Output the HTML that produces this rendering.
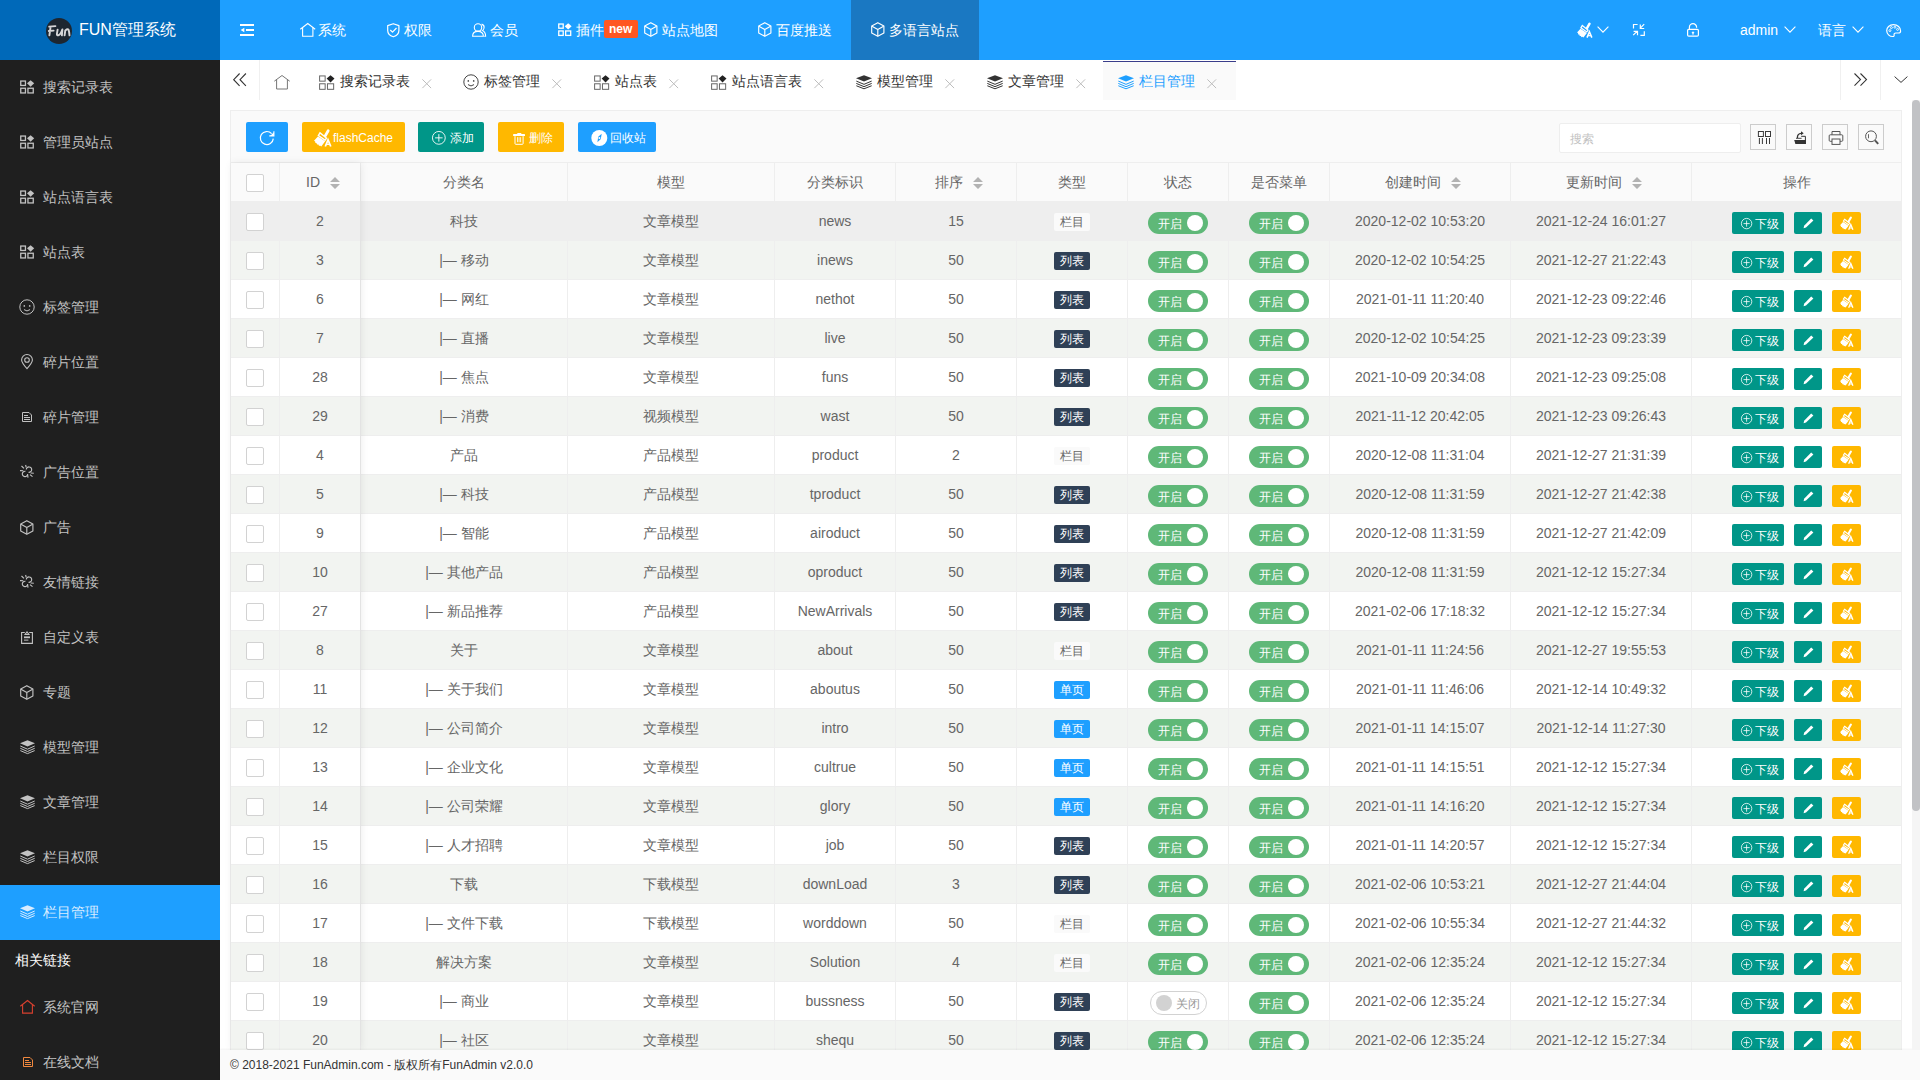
<!DOCTYPE html><html><head><meta charset="utf-8"><title>FunAdmin</title><style>
*{box-sizing:border-box;margin:0;padding:0}
html,body{width:1920px;height:1080px;overflow:hidden;background:#fff}
body{position:relative;font-family:"Liberation Sans",sans-serif;font-size:14px;color:#666}
.a{position:absolute}
.ic{position:absolute;display:block;overflow:visible}
.t{position:absolute;white-space:nowrap;line-height:1}
.sb{color:#c2c2c2;font-size:14px}
.hd{color:#fff;font-size:14px}
.c{position:absolute;text-align:center;line-height:1;white-space:nowrap}
.btn{position:absolute;border-radius:2px}
.sw{position:absolute;width:60px;height:22px;border-radius:20px;background:#5fb878}
.sw .k{position:absolute;left:39px;top:3px;width:16px;height:16px;border-radius:50%;background:#fff}
.sw .l{position:absolute;left:9.5px;top:5.6px;font-size:12px;color:#fff;line-height:1}
.tag{position:absolute;width:36px;height:18px;border-radius:2px;font-size:12px;line-height:18px;text-align:center}
.cb{position:absolute;width:18px;height:18px;border:1px solid #d2d2d2;background:#fff;border-radius:2px}
</style></head><body>
<div class="a" style="left:0;top:60px;width:220px;height:1020px;background:#1f1f1f"></div>
<div class="a" style="left:0;top:0;width:220px;height:60px;background:#0069b9"></div>
<div class="a" style="left:46px;top:18px;width:26px;height:26px;border-radius:50%;background:#1d2630"></div>
<svg class="ic" style="left:40px;top:12px" width="40" height="38" viewBox="0 0 40 38"><g fill="none" stroke="#d6d6d8" stroke-width="1.9" stroke-linecap="round" stroke-linejoin="round"><path d="M9.2 14.6 L15.4 14.1 M10.6 14.6 L9.4 23.4 M8.8 19 L13.6 18.6"/><path d="M17.6 17.6 L16.9 21.8 Q16.7 23.4 18.4 23.2 Q20.6 22.8 22.4 17.4 L21.9 23.3"/><path d="M24.6 23.4 L25.3 18.4 Q27.6 16.6 28.6 17.8 Q29.2 19.4 29.5 23.4"/></g></svg>
<div class="t" style="left:79px;top:22px;font-size:16px;color:#fff">FUN管理系统</div>
<svg class="ic" style="left:20px;top:80px" width="17" height="17" viewBox="0 0 17 17"><g fill="none" stroke="#c2c2c2" stroke-width="1.3"><rect x="0.75" y="1.05" width="4.70" height="4.40"/><rect x="0.75" y="8.25" width="4.70" height="4.70"/><rect x="7.95" y="8.25" width="5.30" height="4.70"/></g><path d="M10.60 0.20 L14.20 3.30 L10.60 6.80 L7.00 3.30Z" fill="#c2c2c2"/></svg>
<div class="t sb" style="left:43px;top:80px;color:#c2c2c2">搜索记录表</div>
<svg class="ic" style="left:20px;top:135px" width="17" height="17" viewBox="0 0 17 17"><g fill="none" stroke="#c2c2c2" stroke-width="1.3"><rect x="0.75" y="1.05" width="4.70" height="4.40"/><rect x="0.75" y="8.25" width="4.70" height="4.70"/><rect x="7.95" y="8.25" width="5.30" height="4.70"/></g><path d="M10.60 0.20 L14.20 3.30 L10.60 6.80 L7.00 3.30Z" fill="#c2c2c2"/></svg>
<div class="t sb" style="left:43px;top:135px;color:#c2c2c2">管理员站点</div>
<svg class="ic" style="left:20px;top:190px" width="17" height="17" viewBox="0 0 17 17"><g fill="none" stroke="#c2c2c2" stroke-width="1.3"><rect x="0.75" y="1.05" width="4.70" height="4.40"/><rect x="0.75" y="8.25" width="4.70" height="4.70"/><rect x="7.95" y="8.25" width="5.30" height="4.70"/></g><path d="M10.60 0.20 L14.20 3.30 L10.60 6.80 L7.00 3.30Z" fill="#c2c2c2"/></svg>
<div class="t sb" style="left:43px;top:190px;color:#c2c2c2">站点语言表</div>
<svg class="ic" style="left:20px;top:245px" width="17" height="17" viewBox="0 0 17 17"><g fill="none" stroke="#c2c2c2" stroke-width="1.3"><rect x="0.75" y="1.05" width="4.70" height="4.40"/><rect x="0.75" y="8.25" width="4.70" height="4.70"/><rect x="7.95" y="8.25" width="5.30" height="4.70"/></g><path d="M10.60 0.20 L14.20 3.30 L10.60 6.80 L7.00 3.30Z" fill="#c2c2c2"/></svg>
<div class="t sb" style="left:43px;top:245px;color:#c2c2c2">站点表</div>
<svg class="ic" style="left:19.2px;top:298.7px" width="16" height="16" viewBox="0 0 16 16"><g fill="none" stroke="#c2c2c2" stroke-width="1.0"><circle cx="8" cy="8" r="7.2"/><path d="M5.0 10.6 Q8 13.3 11.0 10.6"/></g><ellipse cx="5.3" cy="6.9" rx="0.8" ry="0.95" fill="#c2c2c2"/><ellipse cx="10.7" cy="6.9" rx="0.8" ry="0.95" fill="#c2c2c2"/></svg>
<div class="t sb" style="left:43px;top:300px;color:#c2c2c2">标签管理</div>
<svg class="ic" style="left:21px;top:354px" width="12" height="16" viewBox="0 0 12 16"><g fill="none" stroke="#c2c2c2" stroke-width="1.1"><path d="M6 14.6 C2.5 10.6 0.6 8.2 0.6 5.9 A5.4 5.4 0 0 1 11.4 5.9 C11.4 8.2 9.5 10.6 6 14.6Z"/><circle cx="6" cy="6" r="2.3"/></g></svg>
<div class="t sb" style="left:43px;top:355px;color:#c2c2c2">碎片位置</div>
<svg class="ic" style="left:22px;top:412px" width="11" height="11" viewBox="0 0 11 11"><g fill="none" stroke="#c2c2c2" stroke-width="1"><path d="M0.5 0.5 H7 L9.5 3 V9.5 H0.5Z"/><path d="M2 3.5 H6 M2 5.5 H8 M2 7.5 H8"/></g></svg>
<div class="t sb" style="left:43px;top:410px;color:#c2c2c2">碎片管理</div>
<svg class="ic" style="left:17px;top:462px" width="20" height="20" viewBox="0 0 20 20"><g fill="none" stroke="#c2c2c2" stroke-width="1.15" stroke-linecap="butt"><path d="M9.3 7.6 A2.7 2.7 0 1 1 11.5 10.3"/><path d="M10.7 12 A2.7 2.7 0 1 1 8.5 9.3"/><path d="M4.5 4 L7 6.3 M8.6 3 L9.2 5.4 M3 8.6 L6.3 8.8 M13.7 11 L16.8 11.2 M13 12.6 L15.5 14.6 M10.6 12.8 L11 15.6"/></g></svg>
<div class="t sb" style="left:43px;top:465px;color:#c2c2c2">广告位置</div>
<svg class="ic" style="left:20px;top:519.5px" width="14" height="15" viewBox="0 0 14 15"><g fill="none" stroke="#c2c2c2" stroke-width="1.15" stroke-linejoin="round"><path d="M6.8 0.7 L12.9 4.1 V10.9 L6.8 14.3 L0.7 10.9 V4.1Z"/><path d="M1 4.3 L6.8 7.6 L12.6 4.3 M6.8 7.6 V14"/></g></svg>
<div class="t sb" style="left:43px;top:520px;color:#c2c2c2">广告</div>
<svg class="ic" style="left:17px;top:572px" width="20" height="20" viewBox="0 0 20 20"><g fill="none" stroke="#c2c2c2" stroke-width="1.15" stroke-linecap="butt"><path d="M9.3 7.6 A2.7 2.7 0 1 1 11.5 10.3"/><path d="M10.7 12 A2.7 2.7 0 1 1 8.5 9.3"/><path d="M4.5 4 L7 6.3 M8.6 3 L9.2 5.4 M3 8.6 L6.3 8.8 M13.7 11 L16.8 11.2 M13 12.6 L15.5 14.6 M10.6 12.8 L11 15.6"/></g></svg>
<div class="t sb" style="left:43px;top:575px;color:#c2c2c2">友情链接</div>
<svg class="ic" style="left:21px;top:630.5px" width="12" height="13" viewBox="0 0 12 13"><g fill="none" stroke="#c2c2c2" stroke-width="1.1"><path d="M3.8 1.5 H0.6 V12.4 H11.4 V1.5 H8.2"/><path d="M4 3.5 L6 0.8 L8 3.5Z"/></g><rect x="3" y="5.4" width="6" height="1.8" fill="#c2c2c2"/><rect x="3" y="8.6" width="4.4" height="1" fill="#c2c2c2"/></svg>
<div class="t sb" style="left:43px;top:630px;color:#c2c2c2">自定义表</div>
<svg class="ic" style="left:20px;top:684.5px" width="14" height="15" viewBox="0 0 14 15"><g fill="none" stroke="#c2c2c2" stroke-width="1.15" stroke-linejoin="round"><path d="M6.8 0.7 L12.9 4.1 V10.9 L6.8 14.3 L0.7 10.9 V4.1Z"/><path d="M1 4.3 L6.8 7.6 L12.6 4.3 M6.8 7.6 V14"/></g></svg>
<div class="t sb" style="left:43px;top:685px;color:#c2c2c2">专题</div>
<svg class="ic" style="left:19.6px;top:740px" width="16" height="15" viewBox="0 0 16 15"><path d="M7.50 0.20 L15.00 3.30 L7.50 6.40 L0.00 3.30Z" fill="#c2c2c2"/><g fill="none" stroke="#c2c2c2" stroke-width="1.0"><path d="M0.30 6.00 L7.50 9.20 L14.70 6.00"/><path d="M0.30 8.30 L7.50 11.50 L14.70 8.30"/><path d="M0.30 10.60 L7.50 13.60 L14.70 10.60"/></g></svg>
<div class="t sb" style="left:43px;top:740px;color:#c2c2c2">模型管理</div>
<svg class="ic" style="left:19.6px;top:795px" width="16" height="15" viewBox="0 0 16 15"><path d="M7.50 0.20 L15.00 3.30 L7.50 6.40 L0.00 3.30Z" fill="#c2c2c2"/><g fill="none" stroke="#c2c2c2" stroke-width="1.0"><path d="M0.30 6.00 L7.50 9.20 L14.70 6.00"/><path d="M0.30 8.30 L7.50 11.50 L14.70 8.30"/><path d="M0.30 10.60 L7.50 13.60 L14.70 10.60"/></g></svg>
<div class="t sb" style="left:43px;top:795px;color:#c2c2c2">文章管理</div>
<svg class="ic" style="left:19.6px;top:850px" width="16" height="15" viewBox="0 0 16 15"><path d="M7.50 0.20 L15.00 3.30 L7.50 6.40 L0.00 3.30Z" fill="#c2c2c2"/><g fill="none" stroke="#c2c2c2" stroke-width="1.0"><path d="M0.30 6.00 L7.50 9.20 L14.70 6.00"/><path d="M0.30 8.30 L7.50 11.50 L14.70 8.30"/><path d="M0.30 10.60 L7.50 13.60 L14.70 10.60"/></g></svg>
<div class="t sb" style="left:43px;top:850px;color:#c2c2c2">栏目权限</div>
<div class="a" style="left:0;top:885px;width:220px;height:55px;background:#1e9fff"></div>
<svg class="ic" style="left:19.6px;top:905px" width="16" height="15" viewBox="0 0 16 15"><path d="M7.50 0.20 L15.00 3.30 L7.50 6.40 L0.00 3.30Z" fill="#d9ecff"/><g fill="none" stroke="#d9ecff" stroke-width="1.0"><path d="M0.30 6.00 L7.50 9.20 L14.70 6.00"/><path d="M0.30 8.30 L7.50 11.50 L14.70 8.30"/><path d="M0.30 10.60 L7.50 13.60 L14.70 10.60"/></g></svg>
<div class="t sb" style="left:43px;top:905px;color:#d9ecff">栏目管理</div>
<div class="t" style="left:15px;top:953px;font-size:14px;color:#fff">相关链接</div>
<svg class="ic" style="left:20px;top:999.6px" width="15" height="13.6" viewBox="0 0 15 13.6"><g fill="none" stroke="#d8402f" stroke-width="1.1"><path d="M0.3 6.2 L7.50 0.5 L14.70 6.2"/><path d="M2.6 4.5 V13.10 H12.40 V4.5"/></g></svg>
<div class="t sb" style="left:43px;top:1000px">系统官网</div>
<svg class="ic" style="left:22.5px;top:1057px" width="10" height="11" viewBox="0 0 10 11"><g fill="none" stroke="#f0883e" stroke-width="1"><path d="M0.5 0.5 H7 L9.5 3 V9.5 H0.5Z"/><path d="M2 3.5 H6 M2 5.5 H8 M2 7.5 H8"/></g></svg>
<div class="t sb" style="left:43px;top:1055px">在线文档</div>
<div class="a" style="left:220px;top:0;width:1700px;height:60px;background:#1e9fff"></div>
<svg class="ic" style="left:240px;top:24px" width="14" height="12" viewBox="0 0 14 12"><g fill="#fff"><rect x="0" y="0" width="14" height="2"/><rect x="6" y="5" width="8" height="2"/><rect x="0" y="10" width="14" height="2"/><path d="M0.6 6 L4.3 3.8 V8.2Z"/></g></svg>
<div class="a" style="left:851px;top:0;width:128px;height:60px;background:#1a78c2"></div>
<svg class="ic" style="left:299.5px;top:22.5px" width="15.5" height="13.8" viewBox="0 0 15.5 13.8"><g fill="none" stroke="#fff" stroke-width="1.1"><path d="M0.3 6.2 L7.75 0.5 L15.20 6.2"/><path d="M2.6 4.5 V13.30 H12.90 V4.5"/></g></svg>
<div class="t hd" style="left:318px;top:23px">系统</div>
<svg class="ic" style="left:386.5px;top:22.5px" width="13" height="15" viewBox="0 0 13 15"><g fill="none" stroke="#fff" stroke-width="1.2" stroke-linejoin="round"><path d="M6.3 0.7 L11.9 2.6 V7.6 C11.9 10.6 9.6 12.8 6.3 13.8 C3 12.8 0.7 10.6 0.7 7.6 V2.6Z"/><path d="M3.3 7 L5.5 9.2 L9.5 5"/></g></svg>
<div class="t hd" style="left:404px;top:23px">权限</div>
<svg class="ic" style="left:471.5px;top:23px" width="15" height="14" viewBox="0 0 15 14"><g fill="none" stroke="#fff" stroke-width="1.1"><circle cx="6" cy="4.4" r="3.7"/><path d="M0.6 13.3 C0.6 10.3 2.6 8.4 6 8.4 C9.4 8.4 11.4 10.3 11.4 13.3Z"/><path d="M9.6 1.1 C11.6 1.7 12.3 3.3 12.1 4.8 C11.9 6.3 11 7.2 10.4 7.6 C12.6 8.6 13.7 10.6 13.6 13.3 H12.2"/></g></svg>
<div class="t hd" style="left:490px;top:23px">会员</div>
<svg class="ic" style="left:558px;top:23px" width="16" height="16" viewBox="0 0 16 16"><g fill="none" stroke="#fff" stroke-width="1.3"><rect x="0.75" y="1.03" width="4.46" height="4.17"/><rect x="0.75" y="7.95" width="4.46" height="4.46"/><rect x="7.66" y="7.95" width="5.04" height="4.46"/></g><path d="M10.18 0.20 L13.63 3.17 L10.18 6.53 L6.72 3.17Z" fill="#fff"/></svg>
<div class="t hd" style="left:576px;top:23px">插件</div>
<div class="a" style="left:604px;top:20px;width:34px;height:18px;background:#ff5722;border-radius:2px"></div>
<div class="t" style="left:609px;top:23px;font-size:12px;color:#fff;font-weight:bold">new</div>
<svg class="ic" style="left:643.5px;top:22.3px" width="14" height="15" viewBox="0 0 14 15"><g fill="none" stroke="#fff" stroke-width="1.15" stroke-linejoin="round"><path d="M6.8 0.7 L12.9 4.1 V10.9 L6.8 14.3 L0.7 10.9 V4.1Z"/><path d="M1 4.3 L6.8 7.6 L12.6 4.3 M6.8 7.6 V14"/></g></svg>
<div class="t hd" style="left:662px;top:23px">站点地图</div>
<svg class="ic" style="left:757.5px;top:22.3px" width="14" height="15" viewBox="0 0 14 15"><g fill="none" stroke="#fff" stroke-width="1.15" stroke-linejoin="round"><path d="M6.8 0.7 L12.9 4.1 V10.9 L6.8 14.3 L0.7 10.9 V4.1Z"/><path d="M1 4.3 L6.8 7.6 L12.6 4.3 M6.8 7.6 V14"/></g></svg>
<div class="t hd" style="left:776px;top:23px">百度推送</div>
<svg class="ic" style="left:871px;top:22.3px" width="14" height="15" viewBox="0 0 14 15"><g fill="none" stroke="#fff" stroke-width="1.15" stroke-linejoin="round"><path d="M6.8 0.7 L12.9 4.1 V10.9 L6.8 14.3 L0.7 10.9 V4.1Z"/><path d="M1 4.3 L6.8 7.6 L12.6 4.3 M6.8 7.6 V14"/></g></svg>
<div class="t hd" style="left:889px;top:23px">多语言站点</div>
<svg class="ic" style="left:1577px;top:22.6px" width="18" height="18" viewBox="0 0 18 18"><path d="M12.54 0.69 L9.89 5.29" stroke="#fff" stroke-width="2.42" stroke-linecap="round"/><path d="M5.29 2.53 L11.04 7.13 L9.77 8.97 L3.91 4.83Z" fill="none" stroke="#fff" stroke-width="1.26"/><path d="M3.45 5.75 L9.89 10.00 L6.44 14.49 L5.29 13.68 L4.48 14.14 L3.91 12.88 L2.76 12.88 L2.30 11.61 L1.15 11.38 L1.03 10.12 L0.00 9.54Z" fill="#fff"/><path d="M10.00 14.60 L12.42 8.74 L14.83 14.60" fill="none" stroke="#fff" stroke-width="1.55"/><path d="M11.04 12.65 L13.80 12.65" stroke="#fff" stroke-width="1.15"/></svg>
<svg class="ic" style="left:1597px;top:26px" width="12" height="7" viewBox="0 0 12 7"><path d="M0.6 0.6 L6.00 6.10 L11.40 0.6" fill="none" stroke="#fff" stroke-width="1.1"/></svg>
<svg class="ic" style="left:1632px;top:23px" width="14" height="14" viewBox="0 0 14 14"><g fill="none" stroke="#fff" stroke-width="1.2"><path d="M1.5 5.6 V1.5 H5.6"/><path d="M12.2 1.2 L8.3 5.1 M8.3 1.6 V5.5 H12.2"/><path d="M1.2 12.2 L5.1 8.3 M1.6 8.3 H5.5 V12.2"/><path d="M8.4 12.3 H12.3 V8.2"/></g></svg>
<svg class="ic" style="left:1687px;top:23px" width="12" height="14" viewBox="0 0 12 14"><g fill="none" stroke="#fff" stroke-width="1.2"><rect x="0.6" y="6.3" width="10.8" height="6.8" rx="1.2"/><path d="M2.4 6.3 V4.3 A3.6 3.6 0 0 1 9.6 4.3 V4.8"/></g><path d="M6 8.3 L7.6 10 H6.7 V11.6 H5.3 V10 H4.4Z" fill="#fff"/></svg>
<div class="t hd" style="left:1740px;top:23px">admin</div>
<svg class="ic" style="left:1783.5px;top:26px" width="12" height="7" viewBox="0 0 12 7"><path d="M0.6 0.6 L6.00 6.10 L11.40 0.6" fill="none" stroke="#fff" stroke-width="1.1"/></svg>
<div class="t hd" style="left:1818px;top:23px">语言</div>
<svg class="ic" style="left:1851.5px;top:26px" width="12" height="7" viewBox="0 0 12 7"><path d="M0.6 0.6 L6.00 6.10 L11.40 0.6" fill="none" stroke="#fff" stroke-width="1.1"/></svg>
<svg class="ic" style="left:1885.5px;top:23.5px" width="16" height="13" viewBox="0 0 16 13"><path d="M7.5 0.7 C3.4 0.7 0.7 3.4 0.7 6.6 C0.7 10 3.6 12.5 6.7 12.5 C7.9 12.5 8.3 11.9 8.1 11.1 C7.8 10 8.5 9 9.8 9 H12.3 C13.9 9 14.6 8.1 14.6 6.9 C14.6 3.4 11.5 0.7 7.5 0.7Z" fill="none" stroke="#fff" stroke-width="1.2"/><g fill="none" stroke="#fff" stroke-width="0.9"><circle cx="3.9" cy="6.6" r="1"/><circle cx="5.4" cy="3.6" r="1"/><circle cx="8.9" cy="3.2" r="1"/><circle cx="11.6" cy="5.4" r="1"/></g></svg>
<div class="a" style="left:259px;top:60px;width:1px;height:40px;background:#f0f0f0"></div>
<svg class="ic" style="left:233px;top:73px" width="14" height="14" viewBox="0 0 14 14"><path d="M6.6 0.5 L0.7 6.7 L6.6 12.9 M12.9 0.5 L7 6.7 L12.9 12.9" fill="none" stroke="#333" stroke-width="1.1"/></svg>
<svg class="ic" style="left:274px;top:74.5px" width="16" height="14.5" viewBox="0 0 16 14.5"><g fill="none" stroke="#777" stroke-width="1.0"><path d="M0.3 6.2 L8.00 0.5 L15.70 6.2"/><path d="M2.6 4.5 V14.00 H13.40 V4.5"/></g></svg>
<svg class="ic" style="left:318.5px;top:74.5px" width="18" height="18" viewBox="0 0 18 18"><g fill="none" stroke="#666" stroke-width="1.0"><rect x="0.61" y="0.94" width="5.54" height="5.21"/><rect x="0.61" y="8.78" width="5.54" height="5.54"/><rect x="8.46" y="8.78" width="6.19" height="5.54"/></g><path d="M11.55 0.19 L15.48 3.60 L11.55 7.41 L7.63 3.60Z" fill="#222"/></svg>
<div class="t" style="left:340px;top:74px;color:#333;font-size:14px">搜索记录表</div>
<svg class="ic" style="left:422px;top:79px" width="10" height="10" viewBox="0 0 10 10"><path d="M0.4 0.4 L9.10 9.10 M9.10 0.4 L0.4 9.10" fill="none" stroke="#bdbdbd" stroke-width="1.0"/></svg>
<svg class="ic" style="left:462.9px;top:73.9px" width="16" height="16" viewBox="0 0 16 16"><g fill="none" stroke="#444" stroke-width="1.0"><circle cx="8" cy="8" r="7.2"/><path d="M5.0 10.6 Q8 13.3 11.0 10.6"/></g><ellipse cx="5.3" cy="6.9" rx="0.8" ry="0.95" fill="#444"/><ellipse cx="10.7" cy="6.9" rx="0.8" ry="0.95" fill="#444"/></svg>
<div class="t" style="left:484px;top:74px;color:#333;font-size:14px">标签管理</div>
<svg class="ic" style="left:552px;top:79px" width="10" height="10" viewBox="0 0 10 10"><path d="M0.4 0.4 L9.10 9.10 M9.10 0.4 L0.4 9.10" fill="none" stroke="#bdbdbd" stroke-width="1.0"/></svg>
<svg class="ic" style="left:593.5px;top:74.5px" width="18" height="18" viewBox="0 0 18 18"><g fill="none" stroke="#666" stroke-width="1.0"><rect x="0.61" y="0.94" width="5.54" height="5.21"/><rect x="0.61" y="8.78" width="5.54" height="5.54"/><rect x="8.46" y="8.78" width="6.19" height="5.54"/></g><path d="M11.55 0.19 L15.48 3.60 L11.55 7.41 L7.63 3.60Z" fill="#222"/></svg>
<div class="t" style="left:615px;top:74px;color:#333;font-size:14px">站点表</div>
<svg class="ic" style="left:669px;top:79px" width="10" height="10" viewBox="0 0 10 10"><path d="M0.4 0.4 L9.10 9.10 M9.10 0.4 L0.4 9.10" fill="none" stroke="#bdbdbd" stroke-width="1.0"/></svg>
<svg class="ic" style="left:710.5px;top:74.5px" width="18" height="18" viewBox="0 0 18 18"><g fill="none" stroke="#666" stroke-width="1.0"><rect x="0.61" y="0.94" width="5.54" height="5.21"/><rect x="0.61" y="8.78" width="5.54" height="5.54"/><rect x="8.46" y="8.78" width="6.19" height="5.54"/></g><path d="M11.55 0.19 L15.48 3.60 L11.55 7.41 L7.63 3.60Z" fill="#222"/></svg>
<div class="t" style="left:732px;top:74px;color:#333;font-size:14px">站点语言表</div>
<svg class="ic" style="left:814px;top:79px" width="10" height="10" viewBox="0 0 10 10"><path d="M0.4 0.4 L9.10 9.10 M9.10 0.4 L0.4 9.10" fill="none" stroke="#bdbdbd" stroke-width="1.0"/></svg>
<svg class="ic" style="left:856px;top:75px" width="17" height="15" viewBox="0 0 17 15"><path d="M8.00 0.20 L16.00 3.35 L8.00 6.49 L0.00 3.35Z" fill="#333"/><g fill="none" stroke="#333" stroke-width="1.0"><path d="M0.32 6.09 L8.00 9.33 L15.68 6.09"/><path d="M0.32 8.42 L8.00 11.66 L15.68 8.42"/><path d="M0.32 10.75 L8.00 13.79 L15.68 10.75"/></g></svg>
<div class="t" style="left:877px;top:74px;color:#333;font-size:14px">模型管理</div>
<svg class="ic" style="left:945px;top:79px" width="10" height="10" viewBox="0 0 10 10"><path d="M0.4 0.4 L9.10 9.10 M9.10 0.4 L0.4 9.10" fill="none" stroke="#bdbdbd" stroke-width="1.0"/></svg>
<svg class="ic" style="left:987px;top:75px" width="17" height="15" viewBox="0 0 17 15"><path d="M8.00 0.20 L16.00 3.35 L8.00 6.49 L0.00 3.35Z" fill="#333"/><g fill="none" stroke="#333" stroke-width="1.0"><path d="M0.32 6.09 L8.00 9.33 L15.68 6.09"/><path d="M0.32 8.42 L8.00 11.66 L15.68 8.42"/><path d="M0.32 10.75 L8.00 13.79 L15.68 10.75"/></g></svg>
<div class="t" style="left:1008px;top:74px;color:#333;font-size:14px">文章管理</div>
<svg class="ic" style="left:1076px;top:79px" width="10" height="10" viewBox="0 0 10 10"><path d="M0.4 0.4 L9.10 9.10 M9.10 0.4 L0.4 9.10" fill="none" stroke="#bdbdbd" stroke-width="1.0"/></svg>
<div class="a" style="left:1103px;top:61px;width:133px;height:1px;background:#393d8a"></div>
<div class="a" style="left:1103px;top:62px;width:133px;height:38px;background:#fafafa"></div>
<svg class="ic" style="left:1118px;top:75px" width="17" height="15" viewBox="0 0 17 15"><path d="M8.00 0.20 L16.00 3.35 L8.00 6.49 L0.00 3.35Z" fill="#1e9fff"/><g fill="none" stroke="#1e9fff" stroke-width="1.0"><path d="M0.32 6.09 L8.00 9.33 L15.68 6.09"/><path d="M0.32 8.42 L8.00 11.66 L15.68 8.42"/><path d="M0.32 10.75 L8.00 13.79 L15.68 10.75"/></g></svg>
<div class="t" style="left:1139px;top:74px;color:#1e9fff;font-size:14px">栏目管理</div>
<svg class="ic" style="left:1207px;top:79px" width="10" height="10" viewBox="0 0 10 10"><path d="M0.4 0.4 L9.10 9.10 M9.10 0.4 L0.4 9.10" fill="none" stroke="#bdbdbd" stroke-width="1.0"/></svg>
<div class="a" style="left:1840px;top:60px;width:1px;height:40px;background:#f0f0f0"></div>
<div class="a" style="left:1880px;top:60px;width:1px;height:40px;background:#f0f0f0"></div>
<svg class="ic" style="left:1854px;top:73.3px" width="14" height="14" viewBox="0 0 14 14"><path d="M0.5 0.5 L6.5 6.6 L0.5 12.7 M6.5 0.5 L12.5 6.6 L6.5 12.7" fill="none" stroke="#333" stroke-width="1.1"/></svg>
<svg class="ic" style="left:1893.5px;top:76px" width="14" height="7.3" viewBox="0 0 14 7.3"><path d="M0.6 0.6 L7.00 6.40 L13.40 0.6" fill="none" stroke="#333" stroke-width="1.0"/></svg>
<div class="a" style="left:230px;top:110px;width:1672px;height:950px;border:1px solid #eee;background:#fafafa"></div>
<div class="a" style="left:231px;top:162px;width:1670px;height:1px;background:#eee"></div>
<div class="btn" style="left:246px;top:122px;width:42px;height:30px;background:#1e9fff"></div>
<svg class="ic" style="left:259px;top:130px" width="17" height="17" viewBox="0 0 17 17"><path d="M14.3 8.6 A6.5 6.5 0 1 1 12.6 3.6" fill="none" stroke="#fff" stroke-width="1.2"/><path d="M10.3 5.9 H14.9 V1.2" fill="none" stroke="#fff" stroke-width="1.1"/><path d="M11 5.9 L14.9 5.9 L14.9 2.2Z" fill="#fff"/></svg>
<div class="btn" style="left:302px;top:122px;width:103px;height:30px;background:#ffb800"></div>
<svg class="ic" style="left:314.3px;top:129.6px" width="20" height="20" viewBox="0 0 20 20"><path d="M14.17 0.78 L11.18 5.98" stroke="#fff" stroke-width="2.73" stroke-linecap="round"/><path d="M5.98 2.86 L12.48 8.06 L11.05 10.14 L4.42 5.46Z" fill="none" stroke="#fff" stroke-width="1.43"/><path d="M3.90 6.50 L11.18 11.31 L7.28 16.38 L5.98 15.47 L5.07 15.99 L4.42 14.56 L3.12 14.56 L2.60 13.13 L1.30 12.87 L1.17 11.44 L0.00 10.79Z" fill="#fff"/><path d="M11.31 16.51 L14.04 9.88 L16.77 16.51" fill="none" stroke="#fff" stroke-width="1.76"/><path d="M12.48 14.30 L15.60 14.30" stroke="#fff" stroke-width="1.30"/></svg>
<div class="t" style="left:333px;top:132px;font-size:12px;color:#fff">flashCache</div>
<div class="btn" style="left:418px;top:122px;width:66px;height:30px;background:#009688"></div>
<svg class="ic" style="left:432.2px;top:131px" width="14" height="14" viewBox="0 0 14 14"><g fill="none" stroke="#fff" stroke-width="0.9"><circle cx="6.85" cy="6.85" r="6.40"/><path d="M6.85 3.08 V10.62 M3.08 6.85 H10.62"/></g></svg>
<div class="t" style="left:449.5px;top:132px;font-size:12px;color:#fff">添加</div>
<div class="btn" style="left:498px;top:122px;width:66px;height:30px;background:#ffb800"></div>
<svg class="ic" style="left:513px;top:133px" width="13" height="12" viewBox="0 0 13 12"><rect x="0.1" y="0.9" width="11.9" height="2.1" rx="0.6" fill="#fff"/><rect x="4.2" y="0" width="4.2" height="1.2" rx="0.5" fill="#fff"/><path d="M2 3.2 V10.6 Q2 11.3 2.7 11.3 H9.4 Q10.1 11.3 10.1 10.6 V3.2" fill="none" stroke="#fff" stroke-width="1"/><path d="M4.5 4.2 V9.2 M6.05 4.2 V9.2 M7.6 4.2 V9.2" stroke="#fff" stroke-width="0.8"/></svg>
<div class="t" style="left:529px;top:132px;font-size:12px;color:#fff">删除</div>
<div class="btn" style="left:578px;top:122px;width:78px;height:30px;background:#1e9fff"></div>
<svg class="ic" style="left:591px;top:130px" width="17" height="16" viewBox="0 0 17 16"><circle cx="8.3" cy="8" r="8" fill="#fff"/><path d="M10.7 3.8 L9.8 9 L6.4 12.2 L7.2 6.8Z" fill="#1e9fff"/><circle cx="8.4" cy="8" r="1" fill="#fff"/></svg>
<div class="t" style="left:610px;top:132px;font-size:12px;color:#fff">回收站</div>
<div class="a" style="left:1559px;top:123px;width:182px;height:30px;background:#fff;border:1px solid #eee;border-radius:2px"></div>
<div class="t" style="left:1570px;top:133px;font-size:12px;color:#c2c2c2">搜索</div>
<div class="a" style="left:1750px;top:124px;width:26px;height:26px;border:1px solid #ccc"></div>
<div class="a" style="left:1786px;top:124px;width:26px;height:26px;border:1px solid #ccc"></div>
<div class="a" style="left:1822px;top:124px;width:26px;height:26px;border:1px solid #ccc"></div>
<div class="a" style="left:1858px;top:124px;width:26px;height:26px;border:1px solid #ccc"></div>
<svg class="ic" style="left:1757px;top:130px" width="15" height="15" viewBox="0 0 15 15"><g fill="none" stroke="#3a3a3a" stroke-width="1"><rect x="1.4" y="1.5" width="5" height="5"/><rect x="8.5" y="1.5" width="5" height="5"/><path d="M2.4 8 V14 M5.4 8 V14 M9.5 8 V14 M12.5 8 V14"/></g></svg>
<svg class="ic" style="left:1793px;top:131px" width="14" height="14" viewBox="0 0 14 14"><path d="M1.2 9 H12.9 V13 H2.4Z" fill="#333"/><path d="M3 7.3 H8.6" stroke="#333" stroke-width="0.9"/><path d="M8.2 5.3 H12.4 V13" fill="none" stroke="#333" stroke-width="1"/><path d="M4.4 7 C4.3 4 5.8 2.4 8.3 2.3" fill="none" stroke="#333" stroke-width="1.3"/><path d="M8 0.3 L10.7 2.3 L8 4.3Z" fill="#333"/></svg>
<svg class="ic" style="left:1828px;top:130px" width="16" height="16" viewBox="0 0 16 16"><g fill="none" stroke="#555" stroke-width="1"><path d="M4 4.8 V1.5 H12 V4.8"/><path d="M4 11.3 H2.2 Q1.2 11.3 1.2 10.3 V5.8 Q1.2 4.8 2.2 4.8 H13.8 Q14.8 4.8 14.8 5.8 V10.3 Q14.8 11.3 13.8 11.3 H12"/><rect x="4" y="9" width="8" height="5.4"/></g></svg>
<svg class="ic" style="left:1864px;top:130px" width="16" height="16" viewBox="0 0 16 16"><g fill="none" stroke="#555" stroke-width="1"><circle cx="7" cy="6.3" r="5.4"/><path d="M11 10.3 L14.2 13.8" stroke-width="2"/><path d="M4.5 4.2 V8.3" stroke-width="0.9"/></g></svg>
<div class="a" style="left:231px;top:163px;width:1670px;height:38px;background:#fafafa"></div>
<div class="a" style="left:231px;top:201px;width:1670px;height:1px;background:#eee"></div>
<div class="a" style="left:231px;top:202px;width:1670px;height:39px;background:#eeeeee;border-bottom:1px solid #eee"></div>
<div class="a" style="left:231px;top:241px;width:1670px;height:39px;background:#f2f4f1;border-bottom:1px solid #eee"></div>
<div class="a" style="left:231px;top:280px;width:1670px;height:39px;background:#ffffff;border-bottom:1px solid #eee"></div>
<div class="a" style="left:231px;top:319px;width:1670px;height:39px;background:#f2f4f1;border-bottom:1px solid #eee"></div>
<div class="a" style="left:231px;top:358px;width:1670px;height:39px;background:#ffffff;border-bottom:1px solid #eee"></div>
<div class="a" style="left:231px;top:397px;width:1670px;height:39px;background:#f2f4f1;border-bottom:1px solid #eee"></div>
<div class="a" style="left:231px;top:436px;width:1670px;height:39px;background:#ffffff;border-bottom:1px solid #eee"></div>
<div class="a" style="left:231px;top:475px;width:1670px;height:39px;background:#f2f4f1;border-bottom:1px solid #eee"></div>
<div class="a" style="left:231px;top:514px;width:1670px;height:39px;background:#ffffff;border-bottom:1px solid #eee"></div>
<div class="a" style="left:231px;top:553px;width:1670px;height:39px;background:#f2f4f1;border-bottom:1px solid #eee"></div>
<div class="a" style="left:231px;top:592px;width:1670px;height:39px;background:#ffffff;border-bottom:1px solid #eee"></div>
<div class="a" style="left:231px;top:631px;width:1670px;height:39px;background:#f2f4f1;border-bottom:1px solid #eee"></div>
<div class="a" style="left:231px;top:670px;width:1670px;height:39px;background:#ffffff;border-bottom:1px solid #eee"></div>
<div class="a" style="left:231px;top:709px;width:1670px;height:39px;background:#f2f4f1;border-bottom:1px solid #eee"></div>
<div class="a" style="left:231px;top:748px;width:1670px;height:39px;background:#ffffff;border-bottom:1px solid #eee"></div>
<div class="a" style="left:231px;top:787px;width:1670px;height:39px;background:#f2f4f1;border-bottom:1px solid #eee"></div>
<div class="a" style="left:231px;top:826px;width:1670px;height:39px;background:#ffffff;border-bottom:1px solid #eee"></div>
<div class="a" style="left:231px;top:865px;width:1670px;height:39px;background:#f2f4f1;border-bottom:1px solid #eee"></div>
<div class="a" style="left:231px;top:904px;width:1670px;height:39px;background:#ffffff;border-bottom:1px solid #eee"></div>
<div class="a" style="left:231px;top:943px;width:1670px;height:39px;background:#f2f4f1;border-bottom:1px solid #eee"></div>
<div class="a" style="left:231px;top:982px;width:1670px;height:39px;background:#ffffff;border-bottom:1px solid #eee"></div>
<div class="a" style="left:231px;top:1021px;width:1670px;height:39px;background:#f2f4f1;border-bottom:1px solid #eee"></div>
<div class="a" style="left:279px;top:163px;width:1px;height:887px;background:#eee"></div>
<div class="a" style="left:360px;top:163px;width:1px;height:887px;background:#eee"></div>
<div class="a" style="left:567px;top:163px;width:1px;height:887px;background:#eee"></div>
<div class="a" style="left:774px;top:163px;width:1px;height:887px;background:#eee"></div>
<div class="a" style="left:895px;top:163px;width:1px;height:887px;background:#eee"></div>
<div class="a" style="left:1016px;top:163px;width:1px;height:887px;background:#eee"></div>
<div class="a" style="left:1127px;top:163px;width:1px;height:887px;background:#eee"></div>
<div class="a" style="left:1228px;top:163px;width:1px;height:887px;background:#eee"></div>
<div class="a" style="left:1329px;top:163px;width:1px;height:887px;background:#eee"></div>
<div class="a" style="left:1510px;top:163px;width:1px;height:887px;background:#eee"></div>
<div class="a" style="left:1691px;top:163px;width:1px;height:887px;background:#eee"></div>
<div class="a" style="left:231px;top:163px;width:129px;height:887px;box-shadow:1px 0 8px rgba(0,0,0,.08)"></div>
<div class="cb" style="left:246px;top:174px"></div>
<div class="t" style="left:306.1px;top:175px;font-size:14px;color:#666">ID</div>
<svg class="ic" style="left:330.29999999999995px;top:177px" width="10" height="12" viewBox="0 0 10 12"><path d="M5 0 L10 5 H0Z M0 7 H10 L5 12Z" fill="#b2b2b2"/></svg>
<div class="c" style="left:361px;width:206px;top:175px;color:#666">分类名</div>
<div class="c" style="left:568px;width:206px;top:175px;color:#666">模型</div>
<div class="c" style="left:775px;width:120px;top:175px;color:#666">分类标识</div>
<div class="t" style="left:934.7px;top:175px;font-size:14px;color:#666">排序</div>
<svg class="ic" style="left:973.0px;top:177px" width="10" height="12" viewBox="0 0 10 12"><path d="M5 0 L10 5 H0Z M0 7 H10 L5 12Z" fill="#b2b2b2"/></svg>
<div class="c" style="left:1017px;width:110px;top:175px;color:#666">类型</div>
<div class="c" style="left:1128px;width:100px;top:175px;color:#666">状态</div>
<div class="c" style="left:1229px;width:100px;top:175px;color:#666">是否菜单</div>
<div class="t" style="left:1384.7px;top:175px;font-size:14px;color:#666">创建时间</div>
<svg class="ic" style="left:1451.0px;top:177px" width="10" height="12" viewBox="0 0 10 12"><path d="M5 0 L10 5 H0Z M0 7 H10 L5 12Z" fill="#b2b2b2"/></svg>
<div class="t" style="left:1565.7px;top:175px;font-size:14px;color:#666">更新时间</div>
<svg class="ic" style="left:1632.0px;top:177px" width="10" height="12" viewBox="0 0 10 12"><path d="M5 0 L10 5 H0Z M0 7 H10 L5 12Z" fill="#b2b2b2"/></svg>
<div class="c" style="left:1692px;width:210px;top:175px;color:#666">操作</div>
<div class="cb" style="left:246px;top:213px"></div>
<div class="c" style="left:280px;width:80px;top:214px">2</div>
<div class="c" style="left:361px;width:206px;top:214px">科技</div>
<div class="c" style="left:568px;width:206px;top:214px">文章模型</div>
<div class="c" style="left:775px;width:120px;top:214px">news</div>
<div class="c" style="left:896px;width:120px;top:214px">15</div>
<div class="tag" style="left:1054px;top:213px;background:#fafafa;color:#666">栏目</div>
<div class="sw" style="left:1148px;top:212px"><div class="l">开启</div><div class="k"></div></div>
<div class="sw" style="left:1249px;top:212px"><div class="l">开启</div><div class="k"></div></div>
<div class="c" style="left:1330px;width:180px;top:214px">2020-12-02 10:53:20</div>
<div class="c" style="left:1511px;width:180px;top:214px">2021-12-24 16:01:27</div>
<div class="btn" style="left:1732px;top:212px;width:52px;height:22px;background:#009688"></div>
<svg class="ic" style="left:1741px;top:218px" width="12" height="12" viewBox="0 0 12 12"><g fill="none" stroke="#fff" stroke-width="0.8"><circle cx="5.60" cy="5.60" r="5.20"/><path d="M5.60 2.52 V8.68 M2.52 5.60 H8.68"/></g></svg>
<div class="t" style="left:1754.5px;top:218px;font-size:12px;color:#fff">下级</div>
<div class="btn" style="left:1794px;top:212px;width:28px;height:22px;background:#009688"></div>
<svg class="ic" style="left:1803px;top:217.8px" width="11" height="11" viewBox="0 0 11 11"><path d="M8.2 0.6 L10.4 2.6 L3 9.6 L0.6 10.3 L1.1 7.8Z" fill="#fff"/></svg>
<div class="btn" style="left:1832px;top:212px;width:29px;height:22px;background:#ffb800"></div>
<svg class="ic" style="left:1840px;top:217.3px" width="16" height="16" viewBox="0 0 16 16"><path d="M10.90 0.60 L8.60 4.60" stroke="#fff" stroke-width="2.10" stroke-linecap="round"/><path d="M4.60 2.20 L9.60 6.20 L8.50 7.80 L3.40 4.20Z" fill="none" stroke="#fff" stroke-width="1.10"/><path d="M3.00 5.00 L8.60 8.70 L5.60 12.60 L4.60 11.90 L3.90 12.30 L3.40 11.20 L2.40 11.20 L2.00 10.10 L1.00 9.90 L0.90 8.80 L0.00 8.30Z" fill="#fff"/><path d="M8.70 12.70 L10.80 7.60 L12.90 12.70" fill="none" stroke="#fff" stroke-width="1.35"/><path d="M9.60 11.00 L12.00 11.00" stroke="#fff" stroke-width="1.00"/></svg>
<div class="cb" style="left:246px;top:252px"></div>
<div class="c" style="left:280px;width:80px;top:253px">3</div>
<div class="c" style="left:361px;width:206px;top:253px">|— 移动</div>
<div class="c" style="left:568px;width:206px;top:253px">文章模型</div>
<div class="c" style="left:775px;width:120px;top:253px">inews</div>
<div class="c" style="left:896px;width:120px;top:253px">50</div>
<div class="tag" style="left:1054px;top:252px;background:#2f4056;color:#fff">列表</div>
<div class="sw" style="left:1148px;top:251px"><div class="l">开启</div><div class="k"></div></div>
<div class="sw" style="left:1249px;top:251px"><div class="l">开启</div><div class="k"></div></div>
<div class="c" style="left:1330px;width:180px;top:253px">2020-12-02 10:54:25</div>
<div class="c" style="left:1511px;width:180px;top:253px">2021-12-27 21:22:43</div>
<div class="btn" style="left:1732px;top:251px;width:52px;height:22px;background:#009688"></div>
<svg class="ic" style="left:1741px;top:257px" width="12" height="12" viewBox="0 0 12 12"><g fill="none" stroke="#fff" stroke-width="0.8"><circle cx="5.60" cy="5.60" r="5.20"/><path d="M5.60 2.52 V8.68 M2.52 5.60 H8.68"/></g></svg>
<div class="t" style="left:1754.5px;top:257px;font-size:12px;color:#fff">下级</div>
<div class="btn" style="left:1794px;top:251px;width:28px;height:22px;background:#009688"></div>
<svg class="ic" style="left:1803px;top:256.8px" width="11" height="11" viewBox="0 0 11 11"><path d="M8.2 0.6 L10.4 2.6 L3 9.6 L0.6 10.3 L1.1 7.8Z" fill="#fff"/></svg>
<div class="btn" style="left:1832px;top:251px;width:29px;height:22px;background:#ffb800"></div>
<svg class="ic" style="left:1840px;top:256.3px" width="16" height="16" viewBox="0 0 16 16"><path d="M10.90 0.60 L8.60 4.60" stroke="#fff" stroke-width="2.10" stroke-linecap="round"/><path d="M4.60 2.20 L9.60 6.20 L8.50 7.80 L3.40 4.20Z" fill="none" stroke="#fff" stroke-width="1.10"/><path d="M3.00 5.00 L8.60 8.70 L5.60 12.60 L4.60 11.90 L3.90 12.30 L3.40 11.20 L2.40 11.20 L2.00 10.10 L1.00 9.90 L0.90 8.80 L0.00 8.30Z" fill="#fff"/><path d="M8.70 12.70 L10.80 7.60 L12.90 12.70" fill="none" stroke="#fff" stroke-width="1.35"/><path d="M9.60 11.00 L12.00 11.00" stroke="#fff" stroke-width="1.00"/></svg>
<div class="cb" style="left:246px;top:291px"></div>
<div class="c" style="left:280px;width:80px;top:292px">6</div>
<div class="c" style="left:361px;width:206px;top:292px">|— 网红</div>
<div class="c" style="left:568px;width:206px;top:292px">文章模型</div>
<div class="c" style="left:775px;width:120px;top:292px">nethot</div>
<div class="c" style="left:896px;width:120px;top:292px">50</div>
<div class="tag" style="left:1054px;top:291px;background:#2f4056;color:#fff">列表</div>
<div class="sw" style="left:1148px;top:290px"><div class="l">开启</div><div class="k"></div></div>
<div class="sw" style="left:1249px;top:290px"><div class="l">开启</div><div class="k"></div></div>
<div class="c" style="left:1330px;width:180px;top:292px">2021-01-11 11:20:40</div>
<div class="c" style="left:1511px;width:180px;top:292px">2021-12-23 09:22:46</div>
<div class="btn" style="left:1732px;top:290px;width:52px;height:22px;background:#009688"></div>
<svg class="ic" style="left:1741px;top:296px" width="12" height="12" viewBox="0 0 12 12"><g fill="none" stroke="#fff" stroke-width="0.8"><circle cx="5.60" cy="5.60" r="5.20"/><path d="M5.60 2.52 V8.68 M2.52 5.60 H8.68"/></g></svg>
<div class="t" style="left:1754.5px;top:296px;font-size:12px;color:#fff">下级</div>
<div class="btn" style="left:1794px;top:290px;width:28px;height:22px;background:#009688"></div>
<svg class="ic" style="left:1803px;top:295.8px" width="11" height="11" viewBox="0 0 11 11"><path d="M8.2 0.6 L10.4 2.6 L3 9.6 L0.6 10.3 L1.1 7.8Z" fill="#fff"/></svg>
<div class="btn" style="left:1832px;top:290px;width:29px;height:22px;background:#ffb800"></div>
<svg class="ic" style="left:1840px;top:295.3px" width="16" height="16" viewBox="0 0 16 16"><path d="M10.90 0.60 L8.60 4.60" stroke="#fff" stroke-width="2.10" stroke-linecap="round"/><path d="M4.60 2.20 L9.60 6.20 L8.50 7.80 L3.40 4.20Z" fill="none" stroke="#fff" stroke-width="1.10"/><path d="M3.00 5.00 L8.60 8.70 L5.60 12.60 L4.60 11.90 L3.90 12.30 L3.40 11.20 L2.40 11.20 L2.00 10.10 L1.00 9.90 L0.90 8.80 L0.00 8.30Z" fill="#fff"/><path d="M8.70 12.70 L10.80 7.60 L12.90 12.70" fill="none" stroke="#fff" stroke-width="1.35"/><path d="M9.60 11.00 L12.00 11.00" stroke="#fff" stroke-width="1.00"/></svg>
<div class="cb" style="left:246px;top:330px"></div>
<div class="c" style="left:280px;width:80px;top:331px">7</div>
<div class="c" style="left:361px;width:206px;top:331px">|— 直播</div>
<div class="c" style="left:568px;width:206px;top:331px">文章模型</div>
<div class="c" style="left:775px;width:120px;top:331px">live</div>
<div class="c" style="left:896px;width:120px;top:331px">50</div>
<div class="tag" style="left:1054px;top:330px;background:#2f4056;color:#fff">列表</div>
<div class="sw" style="left:1148px;top:329px"><div class="l">开启</div><div class="k"></div></div>
<div class="sw" style="left:1249px;top:329px"><div class="l">开启</div><div class="k"></div></div>
<div class="c" style="left:1330px;width:180px;top:331px">2020-12-02 10:54:25</div>
<div class="c" style="left:1511px;width:180px;top:331px">2021-12-23 09:23:39</div>
<div class="btn" style="left:1732px;top:329px;width:52px;height:22px;background:#009688"></div>
<svg class="ic" style="left:1741px;top:335px" width="12" height="12" viewBox="0 0 12 12"><g fill="none" stroke="#fff" stroke-width="0.8"><circle cx="5.60" cy="5.60" r="5.20"/><path d="M5.60 2.52 V8.68 M2.52 5.60 H8.68"/></g></svg>
<div class="t" style="left:1754.5px;top:335px;font-size:12px;color:#fff">下级</div>
<div class="btn" style="left:1794px;top:329px;width:28px;height:22px;background:#009688"></div>
<svg class="ic" style="left:1803px;top:334.8px" width="11" height="11" viewBox="0 0 11 11"><path d="M8.2 0.6 L10.4 2.6 L3 9.6 L0.6 10.3 L1.1 7.8Z" fill="#fff"/></svg>
<div class="btn" style="left:1832px;top:329px;width:29px;height:22px;background:#ffb800"></div>
<svg class="ic" style="left:1840px;top:334.3px" width="16" height="16" viewBox="0 0 16 16"><path d="M10.90 0.60 L8.60 4.60" stroke="#fff" stroke-width="2.10" stroke-linecap="round"/><path d="M4.60 2.20 L9.60 6.20 L8.50 7.80 L3.40 4.20Z" fill="none" stroke="#fff" stroke-width="1.10"/><path d="M3.00 5.00 L8.60 8.70 L5.60 12.60 L4.60 11.90 L3.90 12.30 L3.40 11.20 L2.40 11.20 L2.00 10.10 L1.00 9.90 L0.90 8.80 L0.00 8.30Z" fill="#fff"/><path d="M8.70 12.70 L10.80 7.60 L12.90 12.70" fill="none" stroke="#fff" stroke-width="1.35"/><path d="M9.60 11.00 L12.00 11.00" stroke="#fff" stroke-width="1.00"/></svg>
<div class="cb" style="left:246px;top:369px"></div>
<div class="c" style="left:280px;width:80px;top:370px">28</div>
<div class="c" style="left:361px;width:206px;top:370px">|— 焦点</div>
<div class="c" style="left:568px;width:206px;top:370px">文章模型</div>
<div class="c" style="left:775px;width:120px;top:370px">funs</div>
<div class="c" style="left:896px;width:120px;top:370px">50</div>
<div class="tag" style="left:1054px;top:369px;background:#2f4056;color:#fff">列表</div>
<div class="sw" style="left:1148px;top:368px"><div class="l">开启</div><div class="k"></div></div>
<div class="sw" style="left:1249px;top:368px"><div class="l">开启</div><div class="k"></div></div>
<div class="c" style="left:1330px;width:180px;top:370px">2021-10-09 20:34:08</div>
<div class="c" style="left:1511px;width:180px;top:370px">2021-12-23 09:25:08</div>
<div class="btn" style="left:1732px;top:368px;width:52px;height:22px;background:#009688"></div>
<svg class="ic" style="left:1741px;top:374px" width="12" height="12" viewBox="0 0 12 12"><g fill="none" stroke="#fff" stroke-width="0.8"><circle cx="5.60" cy="5.60" r="5.20"/><path d="M5.60 2.52 V8.68 M2.52 5.60 H8.68"/></g></svg>
<div class="t" style="left:1754.5px;top:374px;font-size:12px;color:#fff">下级</div>
<div class="btn" style="left:1794px;top:368px;width:28px;height:22px;background:#009688"></div>
<svg class="ic" style="left:1803px;top:373.8px" width="11" height="11" viewBox="0 0 11 11"><path d="M8.2 0.6 L10.4 2.6 L3 9.6 L0.6 10.3 L1.1 7.8Z" fill="#fff"/></svg>
<div class="btn" style="left:1832px;top:368px;width:29px;height:22px;background:#ffb800"></div>
<svg class="ic" style="left:1840px;top:373.3px" width="16" height="16" viewBox="0 0 16 16"><path d="M10.90 0.60 L8.60 4.60" stroke="#fff" stroke-width="2.10" stroke-linecap="round"/><path d="M4.60 2.20 L9.60 6.20 L8.50 7.80 L3.40 4.20Z" fill="none" stroke="#fff" stroke-width="1.10"/><path d="M3.00 5.00 L8.60 8.70 L5.60 12.60 L4.60 11.90 L3.90 12.30 L3.40 11.20 L2.40 11.20 L2.00 10.10 L1.00 9.90 L0.90 8.80 L0.00 8.30Z" fill="#fff"/><path d="M8.70 12.70 L10.80 7.60 L12.90 12.70" fill="none" stroke="#fff" stroke-width="1.35"/><path d="M9.60 11.00 L12.00 11.00" stroke="#fff" stroke-width="1.00"/></svg>
<div class="cb" style="left:246px;top:408px"></div>
<div class="c" style="left:280px;width:80px;top:409px">29</div>
<div class="c" style="left:361px;width:206px;top:409px">|— 消费</div>
<div class="c" style="left:568px;width:206px;top:409px">视频模型</div>
<div class="c" style="left:775px;width:120px;top:409px">wast</div>
<div class="c" style="left:896px;width:120px;top:409px">50</div>
<div class="tag" style="left:1054px;top:408px;background:#2f4056;color:#fff">列表</div>
<div class="sw" style="left:1148px;top:407px"><div class="l">开启</div><div class="k"></div></div>
<div class="sw" style="left:1249px;top:407px"><div class="l">开启</div><div class="k"></div></div>
<div class="c" style="left:1330px;width:180px;top:409px">2021-11-12 20:42:05</div>
<div class="c" style="left:1511px;width:180px;top:409px">2021-12-23 09:26:43</div>
<div class="btn" style="left:1732px;top:407px;width:52px;height:22px;background:#009688"></div>
<svg class="ic" style="left:1741px;top:413px" width="12" height="12" viewBox="0 0 12 12"><g fill="none" stroke="#fff" stroke-width="0.8"><circle cx="5.60" cy="5.60" r="5.20"/><path d="M5.60 2.52 V8.68 M2.52 5.60 H8.68"/></g></svg>
<div class="t" style="left:1754.5px;top:413px;font-size:12px;color:#fff">下级</div>
<div class="btn" style="left:1794px;top:407px;width:28px;height:22px;background:#009688"></div>
<svg class="ic" style="left:1803px;top:412.8px" width="11" height="11" viewBox="0 0 11 11"><path d="M8.2 0.6 L10.4 2.6 L3 9.6 L0.6 10.3 L1.1 7.8Z" fill="#fff"/></svg>
<div class="btn" style="left:1832px;top:407px;width:29px;height:22px;background:#ffb800"></div>
<svg class="ic" style="left:1840px;top:412.3px" width="16" height="16" viewBox="0 0 16 16"><path d="M10.90 0.60 L8.60 4.60" stroke="#fff" stroke-width="2.10" stroke-linecap="round"/><path d="M4.60 2.20 L9.60 6.20 L8.50 7.80 L3.40 4.20Z" fill="none" stroke="#fff" stroke-width="1.10"/><path d="M3.00 5.00 L8.60 8.70 L5.60 12.60 L4.60 11.90 L3.90 12.30 L3.40 11.20 L2.40 11.20 L2.00 10.10 L1.00 9.90 L0.90 8.80 L0.00 8.30Z" fill="#fff"/><path d="M8.70 12.70 L10.80 7.60 L12.90 12.70" fill="none" stroke="#fff" stroke-width="1.35"/><path d="M9.60 11.00 L12.00 11.00" stroke="#fff" stroke-width="1.00"/></svg>
<div class="cb" style="left:246px;top:447px"></div>
<div class="c" style="left:280px;width:80px;top:448px">4</div>
<div class="c" style="left:361px;width:206px;top:448px">产品</div>
<div class="c" style="left:568px;width:206px;top:448px">产品模型</div>
<div class="c" style="left:775px;width:120px;top:448px">product</div>
<div class="c" style="left:896px;width:120px;top:448px">2</div>
<div class="tag" style="left:1054px;top:447px;background:#fafafa;color:#666">栏目</div>
<div class="sw" style="left:1148px;top:446px"><div class="l">开启</div><div class="k"></div></div>
<div class="sw" style="left:1249px;top:446px"><div class="l">开启</div><div class="k"></div></div>
<div class="c" style="left:1330px;width:180px;top:448px">2020-12-08 11:31:04</div>
<div class="c" style="left:1511px;width:180px;top:448px">2021-12-27 21:31:39</div>
<div class="btn" style="left:1732px;top:446px;width:52px;height:22px;background:#009688"></div>
<svg class="ic" style="left:1741px;top:452px" width="12" height="12" viewBox="0 0 12 12"><g fill="none" stroke="#fff" stroke-width="0.8"><circle cx="5.60" cy="5.60" r="5.20"/><path d="M5.60 2.52 V8.68 M2.52 5.60 H8.68"/></g></svg>
<div class="t" style="left:1754.5px;top:452px;font-size:12px;color:#fff">下级</div>
<div class="btn" style="left:1794px;top:446px;width:28px;height:22px;background:#009688"></div>
<svg class="ic" style="left:1803px;top:451.8px" width="11" height="11" viewBox="0 0 11 11"><path d="M8.2 0.6 L10.4 2.6 L3 9.6 L0.6 10.3 L1.1 7.8Z" fill="#fff"/></svg>
<div class="btn" style="left:1832px;top:446px;width:29px;height:22px;background:#ffb800"></div>
<svg class="ic" style="left:1840px;top:451.3px" width="16" height="16" viewBox="0 0 16 16"><path d="M10.90 0.60 L8.60 4.60" stroke="#fff" stroke-width="2.10" stroke-linecap="round"/><path d="M4.60 2.20 L9.60 6.20 L8.50 7.80 L3.40 4.20Z" fill="none" stroke="#fff" stroke-width="1.10"/><path d="M3.00 5.00 L8.60 8.70 L5.60 12.60 L4.60 11.90 L3.90 12.30 L3.40 11.20 L2.40 11.20 L2.00 10.10 L1.00 9.90 L0.90 8.80 L0.00 8.30Z" fill="#fff"/><path d="M8.70 12.70 L10.80 7.60 L12.90 12.70" fill="none" stroke="#fff" stroke-width="1.35"/><path d="M9.60 11.00 L12.00 11.00" stroke="#fff" stroke-width="1.00"/></svg>
<div class="cb" style="left:246px;top:486px"></div>
<div class="c" style="left:280px;width:80px;top:487px">5</div>
<div class="c" style="left:361px;width:206px;top:487px">|— 科技</div>
<div class="c" style="left:568px;width:206px;top:487px">产品模型</div>
<div class="c" style="left:775px;width:120px;top:487px">tproduct</div>
<div class="c" style="left:896px;width:120px;top:487px">50</div>
<div class="tag" style="left:1054px;top:486px;background:#2f4056;color:#fff">列表</div>
<div class="sw" style="left:1148px;top:485px"><div class="l">开启</div><div class="k"></div></div>
<div class="sw" style="left:1249px;top:485px"><div class="l">开启</div><div class="k"></div></div>
<div class="c" style="left:1330px;width:180px;top:487px">2020-12-08 11:31:59</div>
<div class="c" style="left:1511px;width:180px;top:487px">2021-12-27 21:42:38</div>
<div class="btn" style="left:1732px;top:485px;width:52px;height:22px;background:#009688"></div>
<svg class="ic" style="left:1741px;top:491px" width="12" height="12" viewBox="0 0 12 12"><g fill="none" stroke="#fff" stroke-width="0.8"><circle cx="5.60" cy="5.60" r="5.20"/><path d="M5.60 2.52 V8.68 M2.52 5.60 H8.68"/></g></svg>
<div class="t" style="left:1754.5px;top:491px;font-size:12px;color:#fff">下级</div>
<div class="btn" style="left:1794px;top:485px;width:28px;height:22px;background:#009688"></div>
<svg class="ic" style="left:1803px;top:490.8px" width="11" height="11" viewBox="0 0 11 11"><path d="M8.2 0.6 L10.4 2.6 L3 9.6 L0.6 10.3 L1.1 7.8Z" fill="#fff"/></svg>
<div class="btn" style="left:1832px;top:485px;width:29px;height:22px;background:#ffb800"></div>
<svg class="ic" style="left:1840px;top:490.3px" width="16" height="16" viewBox="0 0 16 16"><path d="M10.90 0.60 L8.60 4.60" stroke="#fff" stroke-width="2.10" stroke-linecap="round"/><path d="M4.60 2.20 L9.60 6.20 L8.50 7.80 L3.40 4.20Z" fill="none" stroke="#fff" stroke-width="1.10"/><path d="M3.00 5.00 L8.60 8.70 L5.60 12.60 L4.60 11.90 L3.90 12.30 L3.40 11.20 L2.40 11.20 L2.00 10.10 L1.00 9.90 L0.90 8.80 L0.00 8.30Z" fill="#fff"/><path d="M8.70 12.70 L10.80 7.60 L12.90 12.70" fill="none" stroke="#fff" stroke-width="1.35"/><path d="M9.60 11.00 L12.00 11.00" stroke="#fff" stroke-width="1.00"/></svg>
<div class="cb" style="left:246px;top:525px"></div>
<div class="c" style="left:280px;width:80px;top:526px">9</div>
<div class="c" style="left:361px;width:206px;top:526px">|— 智能</div>
<div class="c" style="left:568px;width:206px;top:526px">产品模型</div>
<div class="c" style="left:775px;width:120px;top:526px">airoduct</div>
<div class="c" style="left:896px;width:120px;top:526px">50</div>
<div class="tag" style="left:1054px;top:525px;background:#2f4056;color:#fff">列表</div>
<div class="sw" style="left:1148px;top:524px"><div class="l">开启</div><div class="k"></div></div>
<div class="sw" style="left:1249px;top:524px"><div class="l">开启</div><div class="k"></div></div>
<div class="c" style="left:1330px;width:180px;top:526px">2020-12-08 11:31:59</div>
<div class="c" style="left:1511px;width:180px;top:526px">2021-12-27 21:42:09</div>
<div class="btn" style="left:1732px;top:524px;width:52px;height:22px;background:#009688"></div>
<svg class="ic" style="left:1741px;top:530px" width="12" height="12" viewBox="0 0 12 12"><g fill="none" stroke="#fff" stroke-width="0.8"><circle cx="5.60" cy="5.60" r="5.20"/><path d="M5.60 2.52 V8.68 M2.52 5.60 H8.68"/></g></svg>
<div class="t" style="left:1754.5px;top:530px;font-size:12px;color:#fff">下级</div>
<div class="btn" style="left:1794px;top:524px;width:28px;height:22px;background:#009688"></div>
<svg class="ic" style="left:1803px;top:529.8px" width="11" height="11" viewBox="0 0 11 11"><path d="M8.2 0.6 L10.4 2.6 L3 9.6 L0.6 10.3 L1.1 7.8Z" fill="#fff"/></svg>
<div class="btn" style="left:1832px;top:524px;width:29px;height:22px;background:#ffb800"></div>
<svg class="ic" style="left:1840px;top:529.3px" width="16" height="16" viewBox="0 0 16 16"><path d="M10.90 0.60 L8.60 4.60" stroke="#fff" stroke-width="2.10" stroke-linecap="round"/><path d="M4.60 2.20 L9.60 6.20 L8.50 7.80 L3.40 4.20Z" fill="none" stroke="#fff" stroke-width="1.10"/><path d="M3.00 5.00 L8.60 8.70 L5.60 12.60 L4.60 11.90 L3.90 12.30 L3.40 11.20 L2.40 11.20 L2.00 10.10 L1.00 9.90 L0.90 8.80 L0.00 8.30Z" fill="#fff"/><path d="M8.70 12.70 L10.80 7.60 L12.90 12.70" fill="none" stroke="#fff" stroke-width="1.35"/><path d="M9.60 11.00 L12.00 11.00" stroke="#fff" stroke-width="1.00"/></svg>
<div class="cb" style="left:246px;top:564px"></div>
<div class="c" style="left:280px;width:80px;top:565px">10</div>
<div class="c" style="left:361px;width:206px;top:565px">|— 其他产品</div>
<div class="c" style="left:568px;width:206px;top:565px">产品模型</div>
<div class="c" style="left:775px;width:120px;top:565px">oproduct</div>
<div class="c" style="left:896px;width:120px;top:565px">50</div>
<div class="tag" style="left:1054px;top:564px;background:#2f4056;color:#fff">列表</div>
<div class="sw" style="left:1148px;top:563px"><div class="l">开启</div><div class="k"></div></div>
<div class="sw" style="left:1249px;top:563px"><div class="l">开启</div><div class="k"></div></div>
<div class="c" style="left:1330px;width:180px;top:565px">2020-12-08 11:31:59</div>
<div class="c" style="left:1511px;width:180px;top:565px">2021-12-12 15:27:34</div>
<div class="btn" style="left:1732px;top:563px;width:52px;height:22px;background:#009688"></div>
<svg class="ic" style="left:1741px;top:569px" width="12" height="12" viewBox="0 0 12 12"><g fill="none" stroke="#fff" stroke-width="0.8"><circle cx="5.60" cy="5.60" r="5.20"/><path d="M5.60 2.52 V8.68 M2.52 5.60 H8.68"/></g></svg>
<div class="t" style="left:1754.5px;top:569px;font-size:12px;color:#fff">下级</div>
<div class="btn" style="left:1794px;top:563px;width:28px;height:22px;background:#009688"></div>
<svg class="ic" style="left:1803px;top:568.8px" width="11" height="11" viewBox="0 0 11 11"><path d="M8.2 0.6 L10.4 2.6 L3 9.6 L0.6 10.3 L1.1 7.8Z" fill="#fff"/></svg>
<div class="btn" style="left:1832px;top:563px;width:29px;height:22px;background:#ffb800"></div>
<svg class="ic" style="left:1840px;top:568.3px" width="16" height="16" viewBox="0 0 16 16"><path d="M10.90 0.60 L8.60 4.60" stroke="#fff" stroke-width="2.10" stroke-linecap="round"/><path d="M4.60 2.20 L9.60 6.20 L8.50 7.80 L3.40 4.20Z" fill="none" stroke="#fff" stroke-width="1.10"/><path d="M3.00 5.00 L8.60 8.70 L5.60 12.60 L4.60 11.90 L3.90 12.30 L3.40 11.20 L2.40 11.20 L2.00 10.10 L1.00 9.90 L0.90 8.80 L0.00 8.30Z" fill="#fff"/><path d="M8.70 12.70 L10.80 7.60 L12.90 12.70" fill="none" stroke="#fff" stroke-width="1.35"/><path d="M9.60 11.00 L12.00 11.00" stroke="#fff" stroke-width="1.00"/></svg>
<div class="cb" style="left:246px;top:603px"></div>
<div class="c" style="left:280px;width:80px;top:604px">27</div>
<div class="c" style="left:361px;width:206px;top:604px">|— 新品推荐</div>
<div class="c" style="left:568px;width:206px;top:604px">产品模型</div>
<div class="c" style="left:775px;width:120px;top:604px">NewArrivals</div>
<div class="c" style="left:896px;width:120px;top:604px">50</div>
<div class="tag" style="left:1054px;top:603px;background:#2f4056;color:#fff">列表</div>
<div class="sw" style="left:1148px;top:602px"><div class="l">开启</div><div class="k"></div></div>
<div class="sw" style="left:1249px;top:602px"><div class="l">开启</div><div class="k"></div></div>
<div class="c" style="left:1330px;width:180px;top:604px">2021-02-06 17:18:32</div>
<div class="c" style="left:1511px;width:180px;top:604px">2021-12-12 15:27:34</div>
<div class="btn" style="left:1732px;top:602px;width:52px;height:22px;background:#009688"></div>
<svg class="ic" style="left:1741px;top:608px" width="12" height="12" viewBox="0 0 12 12"><g fill="none" stroke="#fff" stroke-width="0.8"><circle cx="5.60" cy="5.60" r="5.20"/><path d="M5.60 2.52 V8.68 M2.52 5.60 H8.68"/></g></svg>
<div class="t" style="left:1754.5px;top:608px;font-size:12px;color:#fff">下级</div>
<div class="btn" style="left:1794px;top:602px;width:28px;height:22px;background:#009688"></div>
<svg class="ic" style="left:1803px;top:607.8px" width="11" height="11" viewBox="0 0 11 11"><path d="M8.2 0.6 L10.4 2.6 L3 9.6 L0.6 10.3 L1.1 7.8Z" fill="#fff"/></svg>
<div class="btn" style="left:1832px;top:602px;width:29px;height:22px;background:#ffb800"></div>
<svg class="ic" style="left:1840px;top:607.3px" width="16" height="16" viewBox="0 0 16 16"><path d="M10.90 0.60 L8.60 4.60" stroke="#fff" stroke-width="2.10" stroke-linecap="round"/><path d="M4.60 2.20 L9.60 6.20 L8.50 7.80 L3.40 4.20Z" fill="none" stroke="#fff" stroke-width="1.10"/><path d="M3.00 5.00 L8.60 8.70 L5.60 12.60 L4.60 11.90 L3.90 12.30 L3.40 11.20 L2.40 11.20 L2.00 10.10 L1.00 9.90 L0.90 8.80 L0.00 8.30Z" fill="#fff"/><path d="M8.70 12.70 L10.80 7.60 L12.90 12.70" fill="none" stroke="#fff" stroke-width="1.35"/><path d="M9.60 11.00 L12.00 11.00" stroke="#fff" stroke-width="1.00"/></svg>
<div class="cb" style="left:246px;top:642px"></div>
<div class="c" style="left:280px;width:80px;top:643px">8</div>
<div class="c" style="left:361px;width:206px;top:643px">关于</div>
<div class="c" style="left:568px;width:206px;top:643px">文章模型</div>
<div class="c" style="left:775px;width:120px;top:643px">about</div>
<div class="c" style="left:896px;width:120px;top:643px">50</div>
<div class="tag" style="left:1054px;top:642px;background:#fafafa;color:#666">栏目</div>
<div class="sw" style="left:1148px;top:641px"><div class="l">开启</div><div class="k"></div></div>
<div class="sw" style="left:1249px;top:641px"><div class="l">开启</div><div class="k"></div></div>
<div class="c" style="left:1330px;width:180px;top:643px">2021-01-11 11:24:56</div>
<div class="c" style="left:1511px;width:180px;top:643px">2021-12-27 19:55:53</div>
<div class="btn" style="left:1732px;top:641px;width:52px;height:22px;background:#009688"></div>
<svg class="ic" style="left:1741px;top:647px" width="12" height="12" viewBox="0 0 12 12"><g fill="none" stroke="#fff" stroke-width="0.8"><circle cx="5.60" cy="5.60" r="5.20"/><path d="M5.60 2.52 V8.68 M2.52 5.60 H8.68"/></g></svg>
<div class="t" style="left:1754.5px;top:647px;font-size:12px;color:#fff">下级</div>
<div class="btn" style="left:1794px;top:641px;width:28px;height:22px;background:#009688"></div>
<svg class="ic" style="left:1803px;top:646.8px" width="11" height="11" viewBox="0 0 11 11"><path d="M8.2 0.6 L10.4 2.6 L3 9.6 L0.6 10.3 L1.1 7.8Z" fill="#fff"/></svg>
<div class="btn" style="left:1832px;top:641px;width:29px;height:22px;background:#ffb800"></div>
<svg class="ic" style="left:1840px;top:646.3px" width="16" height="16" viewBox="0 0 16 16"><path d="M10.90 0.60 L8.60 4.60" stroke="#fff" stroke-width="2.10" stroke-linecap="round"/><path d="M4.60 2.20 L9.60 6.20 L8.50 7.80 L3.40 4.20Z" fill="none" stroke="#fff" stroke-width="1.10"/><path d="M3.00 5.00 L8.60 8.70 L5.60 12.60 L4.60 11.90 L3.90 12.30 L3.40 11.20 L2.40 11.20 L2.00 10.10 L1.00 9.90 L0.90 8.80 L0.00 8.30Z" fill="#fff"/><path d="M8.70 12.70 L10.80 7.60 L12.90 12.70" fill="none" stroke="#fff" stroke-width="1.35"/><path d="M9.60 11.00 L12.00 11.00" stroke="#fff" stroke-width="1.00"/></svg>
<div class="cb" style="left:246px;top:681px"></div>
<div class="c" style="left:280px;width:80px;top:682px">11</div>
<div class="c" style="left:361px;width:206px;top:682px">|— 关于我们</div>
<div class="c" style="left:568px;width:206px;top:682px">文章模型</div>
<div class="c" style="left:775px;width:120px;top:682px">aboutus</div>
<div class="c" style="left:896px;width:120px;top:682px">50</div>
<div class="tag" style="left:1054px;top:681px;background:#1e9fff;color:#fff">单页</div>
<div class="sw" style="left:1148px;top:680px"><div class="l">开启</div><div class="k"></div></div>
<div class="sw" style="left:1249px;top:680px"><div class="l">开启</div><div class="k"></div></div>
<div class="c" style="left:1330px;width:180px;top:682px">2021-01-11 11:46:06</div>
<div class="c" style="left:1511px;width:180px;top:682px">2021-12-14 10:49:32</div>
<div class="btn" style="left:1732px;top:680px;width:52px;height:22px;background:#009688"></div>
<svg class="ic" style="left:1741px;top:686px" width="12" height="12" viewBox="0 0 12 12"><g fill="none" stroke="#fff" stroke-width="0.8"><circle cx="5.60" cy="5.60" r="5.20"/><path d="M5.60 2.52 V8.68 M2.52 5.60 H8.68"/></g></svg>
<div class="t" style="left:1754.5px;top:686px;font-size:12px;color:#fff">下级</div>
<div class="btn" style="left:1794px;top:680px;width:28px;height:22px;background:#009688"></div>
<svg class="ic" style="left:1803px;top:685.8px" width="11" height="11" viewBox="0 0 11 11"><path d="M8.2 0.6 L10.4 2.6 L3 9.6 L0.6 10.3 L1.1 7.8Z" fill="#fff"/></svg>
<div class="btn" style="left:1832px;top:680px;width:29px;height:22px;background:#ffb800"></div>
<svg class="ic" style="left:1840px;top:685.3px" width="16" height="16" viewBox="0 0 16 16"><path d="M10.90 0.60 L8.60 4.60" stroke="#fff" stroke-width="2.10" stroke-linecap="round"/><path d="M4.60 2.20 L9.60 6.20 L8.50 7.80 L3.40 4.20Z" fill="none" stroke="#fff" stroke-width="1.10"/><path d="M3.00 5.00 L8.60 8.70 L5.60 12.60 L4.60 11.90 L3.90 12.30 L3.40 11.20 L2.40 11.20 L2.00 10.10 L1.00 9.90 L0.90 8.80 L0.00 8.30Z" fill="#fff"/><path d="M8.70 12.70 L10.80 7.60 L12.90 12.70" fill="none" stroke="#fff" stroke-width="1.35"/><path d="M9.60 11.00 L12.00 11.00" stroke="#fff" stroke-width="1.00"/></svg>
<div class="cb" style="left:246px;top:720px"></div>
<div class="c" style="left:280px;width:80px;top:721px">12</div>
<div class="c" style="left:361px;width:206px;top:721px">|— 公司简介</div>
<div class="c" style="left:568px;width:206px;top:721px">文章模型</div>
<div class="c" style="left:775px;width:120px;top:721px">intro</div>
<div class="c" style="left:896px;width:120px;top:721px">50</div>
<div class="tag" style="left:1054px;top:720px;background:#1e9fff;color:#fff">单页</div>
<div class="sw" style="left:1148px;top:719px"><div class="l">开启</div><div class="k"></div></div>
<div class="sw" style="left:1249px;top:719px"><div class="l">开启</div><div class="k"></div></div>
<div class="c" style="left:1330px;width:180px;top:721px">2021-01-11 14:15:07</div>
<div class="c" style="left:1511px;width:180px;top:721px">2021-12-14 11:27:30</div>
<div class="btn" style="left:1732px;top:719px;width:52px;height:22px;background:#009688"></div>
<svg class="ic" style="left:1741px;top:725px" width="12" height="12" viewBox="0 0 12 12"><g fill="none" stroke="#fff" stroke-width="0.8"><circle cx="5.60" cy="5.60" r="5.20"/><path d="M5.60 2.52 V8.68 M2.52 5.60 H8.68"/></g></svg>
<div class="t" style="left:1754.5px;top:725px;font-size:12px;color:#fff">下级</div>
<div class="btn" style="left:1794px;top:719px;width:28px;height:22px;background:#009688"></div>
<svg class="ic" style="left:1803px;top:724.8px" width="11" height="11" viewBox="0 0 11 11"><path d="M8.2 0.6 L10.4 2.6 L3 9.6 L0.6 10.3 L1.1 7.8Z" fill="#fff"/></svg>
<div class="btn" style="left:1832px;top:719px;width:29px;height:22px;background:#ffb800"></div>
<svg class="ic" style="left:1840px;top:724.3px" width="16" height="16" viewBox="0 0 16 16"><path d="M10.90 0.60 L8.60 4.60" stroke="#fff" stroke-width="2.10" stroke-linecap="round"/><path d="M4.60 2.20 L9.60 6.20 L8.50 7.80 L3.40 4.20Z" fill="none" stroke="#fff" stroke-width="1.10"/><path d="M3.00 5.00 L8.60 8.70 L5.60 12.60 L4.60 11.90 L3.90 12.30 L3.40 11.20 L2.40 11.20 L2.00 10.10 L1.00 9.90 L0.90 8.80 L0.00 8.30Z" fill="#fff"/><path d="M8.70 12.70 L10.80 7.60 L12.90 12.70" fill="none" stroke="#fff" stroke-width="1.35"/><path d="M9.60 11.00 L12.00 11.00" stroke="#fff" stroke-width="1.00"/></svg>
<div class="cb" style="left:246px;top:759px"></div>
<div class="c" style="left:280px;width:80px;top:760px">13</div>
<div class="c" style="left:361px;width:206px;top:760px">|— 企业文化</div>
<div class="c" style="left:568px;width:206px;top:760px">文章模型</div>
<div class="c" style="left:775px;width:120px;top:760px">cultrue</div>
<div class="c" style="left:896px;width:120px;top:760px">50</div>
<div class="tag" style="left:1054px;top:759px;background:#1e9fff;color:#fff">单页</div>
<div class="sw" style="left:1148px;top:758px"><div class="l">开启</div><div class="k"></div></div>
<div class="sw" style="left:1249px;top:758px"><div class="l">开启</div><div class="k"></div></div>
<div class="c" style="left:1330px;width:180px;top:760px">2021-01-11 14:15:51</div>
<div class="c" style="left:1511px;width:180px;top:760px">2021-12-12 15:27:34</div>
<div class="btn" style="left:1732px;top:758px;width:52px;height:22px;background:#009688"></div>
<svg class="ic" style="left:1741px;top:764px" width="12" height="12" viewBox="0 0 12 12"><g fill="none" stroke="#fff" stroke-width="0.8"><circle cx="5.60" cy="5.60" r="5.20"/><path d="M5.60 2.52 V8.68 M2.52 5.60 H8.68"/></g></svg>
<div class="t" style="left:1754.5px;top:764px;font-size:12px;color:#fff">下级</div>
<div class="btn" style="left:1794px;top:758px;width:28px;height:22px;background:#009688"></div>
<svg class="ic" style="left:1803px;top:763.8px" width="11" height="11" viewBox="0 0 11 11"><path d="M8.2 0.6 L10.4 2.6 L3 9.6 L0.6 10.3 L1.1 7.8Z" fill="#fff"/></svg>
<div class="btn" style="left:1832px;top:758px;width:29px;height:22px;background:#ffb800"></div>
<svg class="ic" style="left:1840px;top:763.3px" width="16" height="16" viewBox="0 0 16 16"><path d="M10.90 0.60 L8.60 4.60" stroke="#fff" stroke-width="2.10" stroke-linecap="round"/><path d="M4.60 2.20 L9.60 6.20 L8.50 7.80 L3.40 4.20Z" fill="none" stroke="#fff" stroke-width="1.10"/><path d="M3.00 5.00 L8.60 8.70 L5.60 12.60 L4.60 11.90 L3.90 12.30 L3.40 11.20 L2.40 11.20 L2.00 10.10 L1.00 9.90 L0.90 8.80 L0.00 8.30Z" fill="#fff"/><path d="M8.70 12.70 L10.80 7.60 L12.90 12.70" fill="none" stroke="#fff" stroke-width="1.35"/><path d="M9.60 11.00 L12.00 11.00" stroke="#fff" stroke-width="1.00"/></svg>
<div class="cb" style="left:246px;top:798px"></div>
<div class="c" style="left:280px;width:80px;top:799px">14</div>
<div class="c" style="left:361px;width:206px;top:799px">|— 公司荣耀</div>
<div class="c" style="left:568px;width:206px;top:799px">文章模型</div>
<div class="c" style="left:775px;width:120px;top:799px">glory</div>
<div class="c" style="left:896px;width:120px;top:799px">50</div>
<div class="tag" style="left:1054px;top:798px;background:#1e9fff;color:#fff">单页</div>
<div class="sw" style="left:1148px;top:797px"><div class="l">开启</div><div class="k"></div></div>
<div class="sw" style="left:1249px;top:797px"><div class="l">开启</div><div class="k"></div></div>
<div class="c" style="left:1330px;width:180px;top:799px">2021-01-11 14:16:20</div>
<div class="c" style="left:1511px;width:180px;top:799px">2021-12-12 15:27:34</div>
<div class="btn" style="left:1732px;top:797px;width:52px;height:22px;background:#009688"></div>
<svg class="ic" style="left:1741px;top:803px" width="12" height="12" viewBox="0 0 12 12"><g fill="none" stroke="#fff" stroke-width="0.8"><circle cx="5.60" cy="5.60" r="5.20"/><path d="M5.60 2.52 V8.68 M2.52 5.60 H8.68"/></g></svg>
<div class="t" style="left:1754.5px;top:803px;font-size:12px;color:#fff">下级</div>
<div class="btn" style="left:1794px;top:797px;width:28px;height:22px;background:#009688"></div>
<svg class="ic" style="left:1803px;top:802.8px" width="11" height="11" viewBox="0 0 11 11"><path d="M8.2 0.6 L10.4 2.6 L3 9.6 L0.6 10.3 L1.1 7.8Z" fill="#fff"/></svg>
<div class="btn" style="left:1832px;top:797px;width:29px;height:22px;background:#ffb800"></div>
<svg class="ic" style="left:1840px;top:802.3px" width="16" height="16" viewBox="0 0 16 16"><path d="M10.90 0.60 L8.60 4.60" stroke="#fff" stroke-width="2.10" stroke-linecap="round"/><path d="M4.60 2.20 L9.60 6.20 L8.50 7.80 L3.40 4.20Z" fill="none" stroke="#fff" stroke-width="1.10"/><path d="M3.00 5.00 L8.60 8.70 L5.60 12.60 L4.60 11.90 L3.90 12.30 L3.40 11.20 L2.40 11.20 L2.00 10.10 L1.00 9.90 L0.90 8.80 L0.00 8.30Z" fill="#fff"/><path d="M8.70 12.70 L10.80 7.60 L12.90 12.70" fill="none" stroke="#fff" stroke-width="1.35"/><path d="M9.60 11.00 L12.00 11.00" stroke="#fff" stroke-width="1.00"/></svg>
<div class="cb" style="left:246px;top:837px"></div>
<div class="c" style="left:280px;width:80px;top:838px">15</div>
<div class="c" style="left:361px;width:206px;top:838px">|— 人才招聘</div>
<div class="c" style="left:568px;width:206px;top:838px">文章模型</div>
<div class="c" style="left:775px;width:120px;top:838px">job</div>
<div class="c" style="left:896px;width:120px;top:838px">50</div>
<div class="tag" style="left:1054px;top:837px;background:#2f4056;color:#fff">列表</div>
<div class="sw" style="left:1148px;top:836px"><div class="l">开启</div><div class="k"></div></div>
<div class="sw" style="left:1249px;top:836px"><div class="l">开启</div><div class="k"></div></div>
<div class="c" style="left:1330px;width:180px;top:838px">2021-01-11 14:20:57</div>
<div class="c" style="left:1511px;width:180px;top:838px">2021-12-12 15:27:34</div>
<div class="btn" style="left:1732px;top:836px;width:52px;height:22px;background:#009688"></div>
<svg class="ic" style="left:1741px;top:842px" width="12" height="12" viewBox="0 0 12 12"><g fill="none" stroke="#fff" stroke-width="0.8"><circle cx="5.60" cy="5.60" r="5.20"/><path d="M5.60 2.52 V8.68 M2.52 5.60 H8.68"/></g></svg>
<div class="t" style="left:1754.5px;top:842px;font-size:12px;color:#fff">下级</div>
<div class="btn" style="left:1794px;top:836px;width:28px;height:22px;background:#009688"></div>
<svg class="ic" style="left:1803px;top:841.8px" width="11" height="11" viewBox="0 0 11 11"><path d="M8.2 0.6 L10.4 2.6 L3 9.6 L0.6 10.3 L1.1 7.8Z" fill="#fff"/></svg>
<div class="btn" style="left:1832px;top:836px;width:29px;height:22px;background:#ffb800"></div>
<svg class="ic" style="left:1840px;top:841.3px" width="16" height="16" viewBox="0 0 16 16"><path d="M10.90 0.60 L8.60 4.60" stroke="#fff" stroke-width="2.10" stroke-linecap="round"/><path d="M4.60 2.20 L9.60 6.20 L8.50 7.80 L3.40 4.20Z" fill="none" stroke="#fff" stroke-width="1.10"/><path d="M3.00 5.00 L8.60 8.70 L5.60 12.60 L4.60 11.90 L3.90 12.30 L3.40 11.20 L2.40 11.20 L2.00 10.10 L1.00 9.90 L0.90 8.80 L0.00 8.30Z" fill="#fff"/><path d="M8.70 12.70 L10.80 7.60 L12.90 12.70" fill="none" stroke="#fff" stroke-width="1.35"/><path d="M9.60 11.00 L12.00 11.00" stroke="#fff" stroke-width="1.00"/></svg>
<div class="cb" style="left:246px;top:876px"></div>
<div class="c" style="left:280px;width:80px;top:877px">16</div>
<div class="c" style="left:361px;width:206px;top:877px">下载</div>
<div class="c" style="left:568px;width:206px;top:877px">下载模型</div>
<div class="c" style="left:775px;width:120px;top:877px">downLoad</div>
<div class="c" style="left:896px;width:120px;top:877px">3</div>
<div class="tag" style="left:1054px;top:876px;background:#2f4056;color:#fff">列表</div>
<div class="sw" style="left:1148px;top:875px"><div class="l">开启</div><div class="k"></div></div>
<div class="sw" style="left:1249px;top:875px"><div class="l">开启</div><div class="k"></div></div>
<div class="c" style="left:1330px;width:180px;top:877px">2021-02-06 10:53:21</div>
<div class="c" style="left:1511px;width:180px;top:877px">2021-12-27 21:44:04</div>
<div class="btn" style="left:1732px;top:875px;width:52px;height:22px;background:#009688"></div>
<svg class="ic" style="left:1741px;top:881px" width="12" height="12" viewBox="0 0 12 12"><g fill="none" stroke="#fff" stroke-width="0.8"><circle cx="5.60" cy="5.60" r="5.20"/><path d="M5.60 2.52 V8.68 M2.52 5.60 H8.68"/></g></svg>
<div class="t" style="left:1754.5px;top:881px;font-size:12px;color:#fff">下级</div>
<div class="btn" style="left:1794px;top:875px;width:28px;height:22px;background:#009688"></div>
<svg class="ic" style="left:1803px;top:880.8px" width="11" height="11" viewBox="0 0 11 11"><path d="M8.2 0.6 L10.4 2.6 L3 9.6 L0.6 10.3 L1.1 7.8Z" fill="#fff"/></svg>
<div class="btn" style="left:1832px;top:875px;width:29px;height:22px;background:#ffb800"></div>
<svg class="ic" style="left:1840px;top:880.3px" width="16" height="16" viewBox="0 0 16 16"><path d="M10.90 0.60 L8.60 4.60" stroke="#fff" stroke-width="2.10" stroke-linecap="round"/><path d="M4.60 2.20 L9.60 6.20 L8.50 7.80 L3.40 4.20Z" fill="none" stroke="#fff" stroke-width="1.10"/><path d="M3.00 5.00 L8.60 8.70 L5.60 12.60 L4.60 11.90 L3.90 12.30 L3.40 11.20 L2.40 11.20 L2.00 10.10 L1.00 9.90 L0.90 8.80 L0.00 8.30Z" fill="#fff"/><path d="M8.70 12.70 L10.80 7.60 L12.90 12.70" fill="none" stroke="#fff" stroke-width="1.35"/><path d="M9.60 11.00 L12.00 11.00" stroke="#fff" stroke-width="1.00"/></svg>
<div class="cb" style="left:246px;top:915px"></div>
<div class="c" style="left:280px;width:80px;top:916px">17</div>
<div class="c" style="left:361px;width:206px;top:916px">|— 文件下载</div>
<div class="c" style="left:568px;width:206px;top:916px">下载模型</div>
<div class="c" style="left:775px;width:120px;top:916px">worddown</div>
<div class="c" style="left:896px;width:120px;top:916px">50</div>
<div class="tag" style="left:1054px;top:915px;background:#fafafa;color:#666">栏目</div>
<div class="sw" style="left:1148px;top:914px"><div class="l">开启</div><div class="k"></div></div>
<div class="sw" style="left:1249px;top:914px"><div class="l">开启</div><div class="k"></div></div>
<div class="c" style="left:1330px;width:180px;top:916px">2021-02-06 10:55:34</div>
<div class="c" style="left:1511px;width:180px;top:916px">2021-12-27 21:44:32</div>
<div class="btn" style="left:1732px;top:914px;width:52px;height:22px;background:#009688"></div>
<svg class="ic" style="left:1741px;top:920px" width="12" height="12" viewBox="0 0 12 12"><g fill="none" stroke="#fff" stroke-width="0.8"><circle cx="5.60" cy="5.60" r="5.20"/><path d="M5.60 2.52 V8.68 M2.52 5.60 H8.68"/></g></svg>
<div class="t" style="left:1754.5px;top:920px;font-size:12px;color:#fff">下级</div>
<div class="btn" style="left:1794px;top:914px;width:28px;height:22px;background:#009688"></div>
<svg class="ic" style="left:1803px;top:919.8px" width="11" height="11" viewBox="0 0 11 11"><path d="M8.2 0.6 L10.4 2.6 L3 9.6 L0.6 10.3 L1.1 7.8Z" fill="#fff"/></svg>
<div class="btn" style="left:1832px;top:914px;width:29px;height:22px;background:#ffb800"></div>
<svg class="ic" style="left:1840px;top:919.3px" width="16" height="16" viewBox="0 0 16 16"><path d="M10.90 0.60 L8.60 4.60" stroke="#fff" stroke-width="2.10" stroke-linecap="round"/><path d="M4.60 2.20 L9.60 6.20 L8.50 7.80 L3.40 4.20Z" fill="none" stroke="#fff" stroke-width="1.10"/><path d="M3.00 5.00 L8.60 8.70 L5.60 12.60 L4.60 11.90 L3.90 12.30 L3.40 11.20 L2.40 11.20 L2.00 10.10 L1.00 9.90 L0.90 8.80 L0.00 8.30Z" fill="#fff"/><path d="M8.70 12.70 L10.80 7.60 L12.90 12.70" fill="none" stroke="#fff" stroke-width="1.35"/><path d="M9.60 11.00 L12.00 11.00" stroke="#fff" stroke-width="1.00"/></svg>
<div class="cb" style="left:246px;top:954px"></div>
<div class="c" style="left:280px;width:80px;top:955px">18</div>
<div class="c" style="left:361px;width:206px;top:955px">解决方案</div>
<div class="c" style="left:568px;width:206px;top:955px">文章模型</div>
<div class="c" style="left:775px;width:120px;top:955px">Solution</div>
<div class="c" style="left:896px;width:120px;top:955px">4</div>
<div class="tag" style="left:1054px;top:954px;background:#fafafa;color:#666">栏目</div>
<div class="sw" style="left:1148px;top:953px"><div class="l">开启</div><div class="k"></div></div>
<div class="sw" style="left:1249px;top:953px"><div class="l">开启</div><div class="k"></div></div>
<div class="c" style="left:1330px;width:180px;top:955px">2021-02-06 12:35:24</div>
<div class="c" style="left:1511px;width:180px;top:955px">2021-12-12 15:27:34</div>
<div class="btn" style="left:1732px;top:953px;width:52px;height:22px;background:#009688"></div>
<svg class="ic" style="left:1741px;top:959px" width="12" height="12" viewBox="0 0 12 12"><g fill="none" stroke="#fff" stroke-width="0.8"><circle cx="5.60" cy="5.60" r="5.20"/><path d="M5.60 2.52 V8.68 M2.52 5.60 H8.68"/></g></svg>
<div class="t" style="left:1754.5px;top:959px;font-size:12px;color:#fff">下级</div>
<div class="btn" style="left:1794px;top:953px;width:28px;height:22px;background:#009688"></div>
<svg class="ic" style="left:1803px;top:958.8px" width="11" height="11" viewBox="0 0 11 11"><path d="M8.2 0.6 L10.4 2.6 L3 9.6 L0.6 10.3 L1.1 7.8Z" fill="#fff"/></svg>
<div class="btn" style="left:1832px;top:953px;width:29px;height:22px;background:#ffb800"></div>
<svg class="ic" style="left:1840px;top:958.3px" width="16" height="16" viewBox="0 0 16 16"><path d="M10.90 0.60 L8.60 4.60" stroke="#fff" stroke-width="2.10" stroke-linecap="round"/><path d="M4.60 2.20 L9.60 6.20 L8.50 7.80 L3.40 4.20Z" fill="none" stroke="#fff" stroke-width="1.10"/><path d="M3.00 5.00 L8.60 8.70 L5.60 12.60 L4.60 11.90 L3.90 12.30 L3.40 11.20 L2.40 11.20 L2.00 10.10 L1.00 9.90 L0.90 8.80 L0.00 8.30Z" fill="#fff"/><path d="M8.70 12.70 L10.80 7.60 L12.90 12.70" fill="none" stroke="#fff" stroke-width="1.35"/><path d="M9.60 11.00 L12.00 11.00" stroke="#fff" stroke-width="1.00"/></svg>
<div class="cb" style="left:246px;top:993px"></div>
<div class="c" style="left:280px;width:80px;top:994px">19</div>
<div class="c" style="left:361px;width:206px;top:994px">|— 商业</div>
<div class="c" style="left:568px;width:206px;top:994px">文章模型</div>
<div class="c" style="left:775px;width:120px;top:994px">bussness</div>
<div class="c" style="left:896px;width:120px;top:994px">50</div>
<div class="tag" style="left:1054px;top:993px;background:#2f4056;color:#fff">列表</div>
<div class="sw" style="left:1150px;top:991px;width:57px;height:24px;background:#fff;border:1px solid #d2d2d2"><div class="a" style="left:5px;top:3px;width:16px;height:16px;border-radius:50%;background:#d2d2d2"></div><div class="l" style="left:25px;top:5.5px;color:#999">关闭</div></div>
<div class="sw" style="left:1249px;top:992px"><div class="l">开启</div><div class="k"></div></div>
<div class="c" style="left:1330px;width:180px;top:994px">2021-02-06 12:35:24</div>
<div class="c" style="left:1511px;width:180px;top:994px">2021-12-12 15:27:34</div>
<div class="btn" style="left:1732px;top:992px;width:52px;height:22px;background:#009688"></div>
<svg class="ic" style="left:1741px;top:998px" width="12" height="12" viewBox="0 0 12 12"><g fill="none" stroke="#fff" stroke-width="0.8"><circle cx="5.60" cy="5.60" r="5.20"/><path d="M5.60 2.52 V8.68 M2.52 5.60 H8.68"/></g></svg>
<div class="t" style="left:1754.5px;top:998px;font-size:12px;color:#fff">下级</div>
<div class="btn" style="left:1794px;top:992px;width:28px;height:22px;background:#009688"></div>
<svg class="ic" style="left:1803px;top:997.8px" width="11" height="11" viewBox="0 0 11 11"><path d="M8.2 0.6 L10.4 2.6 L3 9.6 L0.6 10.3 L1.1 7.8Z" fill="#fff"/></svg>
<div class="btn" style="left:1832px;top:992px;width:29px;height:22px;background:#ffb800"></div>
<svg class="ic" style="left:1840px;top:997.3px" width="16" height="16" viewBox="0 0 16 16"><path d="M10.90 0.60 L8.60 4.60" stroke="#fff" stroke-width="2.10" stroke-linecap="round"/><path d="M4.60 2.20 L9.60 6.20 L8.50 7.80 L3.40 4.20Z" fill="none" stroke="#fff" stroke-width="1.10"/><path d="M3.00 5.00 L8.60 8.70 L5.60 12.60 L4.60 11.90 L3.90 12.30 L3.40 11.20 L2.40 11.20 L2.00 10.10 L1.00 9.90 L0.90 8.80 L0.00 8.30Z" fill="#fff"/><path d="M8.70 12.70 L10.80 7.60 L12.90 12.70" fill="none" stroke="#fff" stroke-width="1.35"/><path d="M9.60 11.00 L12.00 11.00" stroke="#fff" stroke-width="1.00"/></svg>
<div class="cb" style="left:246px;top:1032px"></div>
<div class="c" style="left:280px;width:80px;top:1033px">20</div>
<div class="c" style="left:361px;width:206px;top:1033px">|— 社区</div>
<div class="c" style="left:568px;width:206px;top:1033px">文章模型</div>
<div class="c" style="left:775px;width:120px;top:1033px">shequ</div>
<div class="c" style="left:896px;width:120px;top:1033px">50</div>
<div class="tag" style="left:1054px;top:1032px;background:#2f4056;color:#fff">列表</div>
<div class="sw" style="left:1148px;top:1031px"><div class="l">开启</div><div class="k"></div></div>
<div class="sw" style="left:1249px;top:1031px"><div class="l">开启</div><div class="k"></div></div>
<div class="c" style="left:1330px;width:180px;top:1033px">2021-02-06 12:35:24</div>
<div class="c" style="left:1511px;width:180px;top:1033px">2021-12-12 15:27:34</div>
<div class="btn" style="left:1732px;top:1031px;width:52px;height:22px;background:#009688"></div>
<svg class="ic" style="left:1741px;top:1037px" width="12" height="12" viewBox="0 0 12 12"><g fill="none" stroke="#fff" stroke-width="0.8"><circle cx="5.60" cy="5.60" r="5.20"/><path d="M5.60 2.52 V8.68 M2.52 5.60 H8.68"/></g></svg>
<div class="t" style="left:1754.5px;top:1037px;font-size:12px;color:#fff">下级</div>
<div class="btn" style="left:1794px;top:1031px;width:28px;height:22px;background:#009688"></div>
<svg class="ic" style="left:1803px;top:1036.8px" width="11" height="11" viewBox="0 0 11 11"><path d="M8.2 0.6 L10.4 2.6 L3 9.6 L0.6 10.3 L1.1 7.8Z" fill="#fff"/></svg>
<div class="btn" style="left:1832px;top:1031px;width:29px;height:22px;background:#ffb800"></div>
<svg class="ic" style="left:1840px;top:1036.3px" width="16" height="16" viewBox="0 0 16 16"><path d="M10.90 0.60 L8.60 4.60" stroke="#fff" stroke-width="2.10" stroke-linecap="round"/><path d="M4.60 2.20 L9.60 6.20 L8.50 7.80 L3.40 4.20Z" fill="none" stroke="#fff" stroke-width="1.10"/><path d="M3.00 5.00 L8.60 8.70 L5.60 12.60 L4.60 11.90 L3.90 12.30 L3.40 11.20 L2.40 11.20 L2.00 10.10 L1.00 9.90 L0.90 8.80 L0.00 8.30Z" fill="#fff"/><path d="M8.70 12.70 L10.80 7.60 L12.90 12.70" fill="none" stroke="#fff" stroke-width="1.35"/><path d="M9.60 11.00 L12.00 11.00" stroke="#fff" stroke-width="1.00"/></svg>
<div class="a" style="left:220px;top:1050px;width:1700px;height:30px;background:#fafafa;box-shadow:0 -1px 2px rgba(0,0,0,.05)"></div>
<div class="t" style="left:230px;top:1059px;font-size:12px;color:#333">© 2018-2021 FunAdmin.com - 版权所有FunAdmin v2.0.0</div>
<div class="a" style="left:1912px;top:100px;width:8px;height:950px;background:#f5f5f5"></div>
<div class="a" style="left:1912px;top:100px;width:8px;height:711px;background:#c1c2c5;border-radius:4px"></div>
</body></html>
